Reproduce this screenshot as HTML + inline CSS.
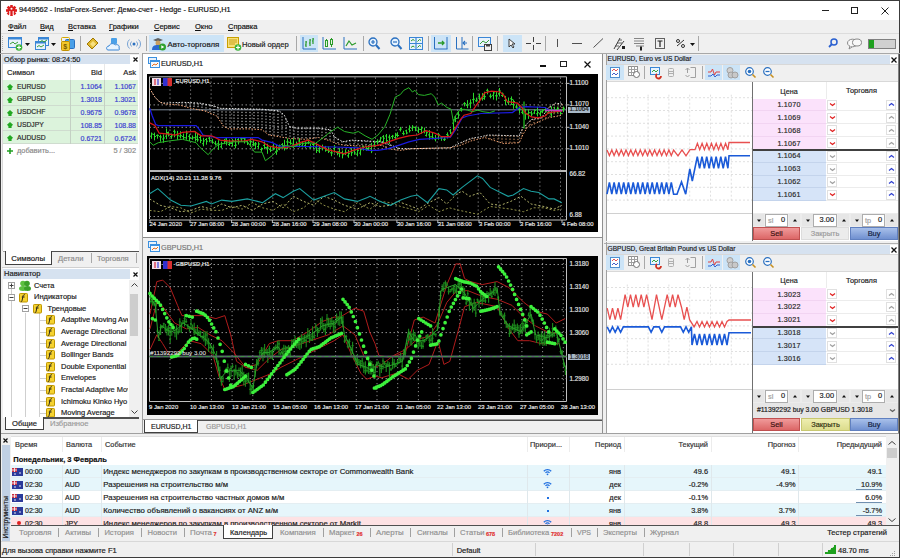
<!DOCTYPE html>
<html><head><meta charset="utf-8">
<style>
*{box-sizing:border-box;margin:0;padding:0}
html,body{width:900px;height:558px;overflow:hidden;background:#f0f0f0;font-family:"Liberation Sans",sans-serif;font-size:7.5px;color:#000;position:relative}
.a{position:absolute}
.t{position:absolute;white-space:nowrap;line-height:1;-webkit-text-stroke:0.18px currentColor}
svg{position:absolute;overflow:visible}
</style></head><body>
<div class="a" style="left:0px;top:0px;width:900px;height:20px;background:#fff;"></div>
<svg style="left:6px;top:5px" width="11" height="11" viewBox="0 0 10.4 10"><rect x="4" y="-0.2" width="2.4" height="2.6" fill="#dc1c1c" transform="rotate(0 5.2 5)"/><rect x="4" y="-0.2" width="2.4" height="2.6" fill="#dc1c1c" transform="rotate(45 5.2 5)"/><rect x="4" y="-0.2" width="2.4" height="2.6" fill="#dc1c1c" transform="rotate(90 5.2 5)"/><rect x="4" y="-0.2" width="2.4" height="2.6" fill="#dc1c1c" transform="rotate(135 5.2 5)"/><rect x="4" y="-0.2" width="2.4" height="2.6" fill="#dc1c1c" transform="rotate(180 5.2 5)"/><rect x="4" y="-0.2" width="2.4" height="2.6" fill="#dc1c1c" transform="rotate(225 5.2 5)"/><rect x="4" y="-0.2" width="2.4" height="2.6" fill="#dc1c1c" transform="rotate(270 5.2 5)"/><rect x="4" y="-0.2" width="2.4" height="2.6" fill="#dc1c1c" transform="rotate(315 5.2 5)"/><circle cx="5.2" cy="5" r="3.8" fill="#dc1c1c"/><circle cx="5.2" cy="3.3" r="1" fill="#fff"/><path d="M3.6 5.5v3.5M6.8 5.5v3.5" stroke="#fff" stroke-width="1"/></svg>
<div class="t" style="left:19px;top:6.45px;font-size:7.4px;color:#111;">9449562 - InstaForex-Server: Демо-счет - Hedge - EURUSD,H1</div>
<div class="a" style="left:822px;top:10px;width:7px;height:1px;background:#222;"></div>
<div class="a" style="left:851px;top:7px;width:7px;height:7px;border:1px solid #222"></div>
<svg style="left:881px;top:7px" width="8" height="8"><path d="M0.5 0.5L7.5 7.5M7.5 0.5L0.5 7.5" stroke="#222" stroke-width="1"/></svg>
<div class="a" style="left:0px;top:20px;width:900px;height:13px;background:#f0f0f0;"></div>
<div class="t" style="left:8px;top:23.40px;font-size:7.5px;color:#111;"><u style="text-decoration-thickness:0.6px;text-underline-offset:1px">Ф</u>айл</div>
<div class="t" style="left:40px;top:23.40px;font-size:7.5px;color:#111;"><u style="text-decoration-thickness:0.6px;text-underline-offset:1px">В</u>ид</div>
<div class="t" style="left:68px;top:23.40px;font-size:7.5px;color:#111;"><u style="text-decoration-thickness:0.6px;text-underline-offset:1px">В</u>ставка</div>
<div class="t" style="left:109px;top:23.40px;font-size:7.5px;color:#111;"><u style="text-decoration-thickness:0.6px;text-underline-offset:1px">Г</u>рафики</div>
<div class="t" style="left:154px;top:23.40px;font-size:7.5px;color:#111;"><u style="text-decoration-thickness:0.6px;text-underline-offset:1px">С</u>ервис</div>
<div class="t" style="left:195px;top:23.40px;font-size:7.5px;color:#111;"><u style="text-decoration-thickness:0.6px;text-underline-offset:1px">О</u>кно</div>
<div class="t" style="left:228px;top:23.40px;font-size:7.5px;color:#111;"><u style="text-decoration-thickness:0.6px;text-underline-offset:1px">С</u>правка</div>
<div class="a" style="left:0px;top:33px;width:900px;height:1px;background:#dcdcdc;"></div>
<div class="a" style="left:0px;top:34px;width:900px;height:19px;background:#f0f0f0;"></div>
<div class="a" style="left:2px;top:36px;width:1px;height:1px;background:#b0b0b0;"></div>
<div class="a" style="left:2px;top:38px;width:1px;height:1px;background:#b0b0b0;"></div>
<div class="a" style="left:2px;top:40px;width:1px;height:1px;background:#b0b0b0;"></div>
<div class="a" style="left:2px;top:42px;width:1px;height:1px;background:#b0b0b0;"></div>
<div class="a" style="left:2px;top:44px;width:1px;height:1px;background:#b0b0b0;"></div>
<div class="a" style="left:2px;top:46px;width:1px;height:1px;background:#b0b0b0;"></div>
<div class="a" style="left:2px;top:48px;width:1px;height:1px;background:#b0b0b0;"></div>
<div class="a" style="left:2px;top:50px;width:1px;height:1px;background:#b0b0b0;"></div>
<svg style="left:8px;top:37px" width="15" height="14" viewBox="0 0 15 14"><rect x="0.5" y="0.5" width="13" height="10" fill="#e8f2fc" stroke="#3a86d6"/><rect x="0.5" y="0.5" width="13" height="2" fill="#3a86d6"/><path d="M2 7l3-2 2 2 3-2" stroke="#3aa03a" fill="none"/><circle cx="11" cy="10.5" r="3.3" fill="#3cb43c"/><path d="M9 10.5h4M11 8.5v4" stroke="#fff" stroke-width="1.2"/></svg>
<svg style="left:25px;top:43px" width="5" height="3" viewBox="0 0 5 3"><path d="M0 0h5L2.5 3z" fill="#111"/></svg>
<svg style="left:35px;top:37px" width="14" height="14" viewBox="0 0 14 14"><rect x="3.5" y="0.5" width="10" height="8" fill="#e8f2fc" stroke="#3a86d6"/><rect x="3.5" y="0.5" width="10" height="2" fill="#3a86d6"/><rect x="0.5" y="4.5" width="10" height="8" fill="#e8f2fc" stroke="#3a86d6"/><rect x="0.5" y="4.5" width="10" height="2" fill="#3a86d6"/><path d="M2 10l2-1.5 2 1.5 3-2" stroke="#3aa03a" fill="none"/><path d="M5 5l2-1.5 2 1.5 3-2" stroke="#3aa03a" fill="none"/></svg>
<svg style="left:51px;top:43px" width="5" height="3" viewBox="0 0 5 3"><path d="M0 0h5L2.5 3z" fill="#111"/></svg>
<svg style="left:61px;top:37px" width="14" height="14" viewBox="0 0 14 14"><rect x="4.5" y="2.5" width="9" height="9" rx="1" fill="#4aa0e8" stroke="#2a70c0"/><rect x="0.5" y="0.5" width="8" height="4" rx="1" fill="none" stroke="#d4a800"/><rect x="0.5" y="4.5" width="8" height="9" rx="1" fill="#f2c82a" stroke="#c09000"/><text x="2.3" y="12" font-size="7" font-family="Liberation Sans" font-weight="bold" fill="#7a5a00">$</text></svg>
<div class="a" style="left:80px;top:36px;width:1px;height:15px;background:#a8a8a8;"></div>
<svg style="left:86px;top:37px" width="13" height="13" viewBox="0 0 13 13"><path d="M1 7l6-6 5 5-6 6z" fill="#e0b830" stroke="#a07800"/><path d="M4 7l3-3 3 3-3 3z" fill="#f8e080"/></svg>
<svg style="left:106px;top:38px" width="14" height="13" viewBox="0 0 14 13"><rect x="5" y="0" width="6" height="6" rx="1" fill="#4aa0e8"/><path d="M2 12c-2 0-2-4 1-4 1-3 5-3 6-1 2-1 5 0 4 3 1 2 0 2-1 2z" fill="#e8f4ff" stroke="#3a86d6"/></svg>
<svg style="left:127px;top:38px" width="14" height="12" viewBox="0 0 14 12"><circle cx="7" cy="6" r="1.5" fill="#2a70c0"/><path d="M4.5 3.5a3.5 3.5 0 0 0 0 5M9.5 3.5a3.5 3.5 0 0 1 0 5M2.5 1.5a6 6 0 0 0 0 9M11.5 1.5a6 6 0 0 1 0 9" stroke="#6a9ad0" fill="none" stroke-width="0.9"/></svg>
<div class="a" style="left:146px;top:36px;width:1px;height:15px;background:#a8a8a8;"></div>
<div class="a" style="left:149px;top:35px;width:75px;height:17px;background:#cce4f7;"></div>
<svg style="left:152px;top:37px" width="15" height="14" viewBox="0 0 15 14"><path d="M1 3l5-2 5 2-5 2z" fill="#606060"/><circle cx="6" cy="6" r="2.5" fill="#c8a060"/><path d="M0 13c0-4 2-5 6-5s5 2 5 5z" fill="#2a6ad0"/><circle cx="10.5" cy="10" r="3.5" fill="#2ea02e"/><path d="M9.3 8.2v3.6l3-1.8z" fill="#fff"/></svg>
<div class="t" style="left:167.5px;top:40.73px;font-size:7.85px;color:#1a1a1a;">Авто-торговля</div>
<svg style="left:227px;top:37px" width="15" height="14" viewBox="0 0 15 14"><rect x="0.5" y="0.5" width="11" height="10" fill="#f8e078" stroke="#c8a000"/><path d="M2 3h8M2 5h8M2 7h6" stroke="#b89000" stroke-width="0.8"/><circle cx="11" cy="10.5" r="3.3" fill="#3cb43c"/><path d="M9 10.5h4M11 8.5v4" stroke="#fff" stroke-width="1.2"/></svg>
<div class="t" style="left:242px;top:40.85px;font-size:7.6px;color:#1a1a1a;">Новый ордер</div>
<div class="a" style="left:296px;top:36px;width:1px;height:15px;background:#a8a8a8;"></div>
<div class="a" style="left:300px;top:35px;width:18px;height:17px;background:#cce4f7;"></div>
<svg style="left:302px;top:37px" width="14" height="13" viewBox="0 0 14 13"><path d="M1 0v12h13" stroke="#2a70c0" fill="none"/><path d="M4 4v6M3 8h1M4 5h1M8 2v7M7 6h1M8 3h1M11 1v6M10 4h1M11 2h1" stroke="#2a9a2a" stroke-width="1.2" fill="none"/></svg>
<svg style="left:322px;top:37px" width="14" height="13" viewBox="0 0 14 13"><path d="M1 0v12h13" stroke="#2a70c0" fill="none"/><rect x="3.5" y="3.5" width="2" height="6" fill="#e8f4e0" stroke="#2a9a2a"/><rect x="8.5" y="2.5" width="2" height="5" fill="#e8f4e0" stroke="#2a9a2a"/><path d="M4.5 2v1M9.5 1v1M9.5 8v2" stroke="#2a9a2a"/></svg>
<svg style="left:343px;top:37px" width="14" height="13" viewBox="0 0 14 13"><path d="M1 0v12h13" stroke="#2a70c0" fill="none"/><path d="M3 9l3-5 3 4 4-2" stroke="#2a9a2a" stroke-width="1.2" fill="none"/></svg>
<div class="a" style="left:363px;top:36px;width:1px;height:15px;background:#a8a8a8;"></div>
<svg style="left:368px;top:37px" width="12" height="13" viewBox="0 0 12 13"><circle cx="5" cy="5" r="4" fill="#e8f4ff" stroke="#2a70c0" stroke-width="1.3"/><path d="M3 5h4M5 3v4" stroke="#2a70c0" stroke-width="1.2"/><path d="M8 8l3.5 4" stroke="#2a70c0" stroke-width="2"/></svg>
<svg style="left:390px;top:37px" width="12" height="13" viewBox="0 0 12 13"><circle cx="5" cy="5" r="4" fill="#e8f4ff" stroke="#2a70c0" stroke-width="1.3"/><path d="M3 5h4" stroke="#2a70c0" stroke-width="1.2"/><path d="M8 8l3.5 4" stroke="#2a70c0" stroke-width="2"/></svg>
<svg style="left:409px;top:37px" width="14" height="13" viewBox="0 0 14 13"><rect x="0.5" y="0.5" width="13" height="12" fill="#e8f2fc" stroke="#3a86d6"/><path d="M7 0.5v12M0.5 6.5h13" stroke="#3a86d6" stroke-width="1.2"/><path d="M2 4l2-1.5 1.5 1M8.5 4.5l2-2 1.5 1M2 10.5l2-1.5 1.5 1M8.5 10.5l2-2 1.5 1" stroke="#2a9a2a" fill="none"/></svg>
<div class="a" style="left:428px;top:36px;width:1px;height:15px;background:#a8a8a8;"></div>
<div class="a" style="left:431px;top:35px;width:20px;height:17px;background:#cce4f7;"></div>
<svg style="left:433px;top:37px" width="15" height="13" viewBox="0 0 15 13"><path d="M1.5 0v12h13M14 0v12" stroke="#2a70c0" fill="none"/><path d="M5 6h6M9 4l2 2-2 2" stroke="#2a9a2a" stroke-width="1.3" fill="none"/></svg>
<svg style="left:455px;top:37px" width="13" height="13" viewBox="0 0 13 13"><path d="M1.5 0v12h12M7 0v12" stroke="#2a70c0" fill="none"/><path d="M12 6h-4M10 4l-2 2 2 2" stroke="#2a70c0" stroke-width="1.1" fill="none"/></svg>
<div class="a" style="left:472px;top:36px;width:1px;height:15px;background:#a8a8a8;"></div>
<svg style="left:478px;top:37px" width="14" height="14" viewBox="0 0 14 14"><rect x="0.5" y="0.5" width="12" height="9" fill="#e8f2fc" stroke="#3a86d6"/><path d="M2 7l3-3 3 2 3-3" stroke="#3aa03a" fill="none"/><rect x="6.5" y="7.5" width="7" height="6" fill="#f0f0f0" stroke="#404040"/><rect x="8" y="7.5" width="4" height="2" fill="#404040"/></svg>
<div class="a" style="left:497px;top:36px;width:1px;height:15px;background:#a8a8a8;"></div>
<div class="a" style="left:503px;top:35px;width:19px;height:17px;background:#cce4f7;"></div>
<svg style="left:508px;top:38px" width="8" height="10" viewBox="0 0 8 10"><path d="M1 1v8l2-2 2 3 1-1-2-3h3z" fill="#f8f8f8" stroke="#303030" stroke-width="0.9"/></svg>
<svg style="left:526px;top:37px" width="15" height="13" viewBox="0 0 15 13"><path d="M7.5 0v5M7.5 8v5M0 6.5h5M10 6.5h5" stroke="#404040" stroke-width="1"/></svg>
<div class="a" style="left:545px;top:36px;width:1px;height:15px;background:#a8a8a8;"></div>
<div class="a" style="left:557px;top:39px;width:1px;height:8px;background:#505050;"></div>
<div class="a" style="left:572px;top:43px;width:10px;height:1px;background:#505050;"></div>
<svg style="left:593px;top:38px" width="11" height="10" viewBox="0 0 11 10"><path d="M0.5 9.5L10 0.5" stroke="#505050"/></svg>
<svg style="left:613px;top:37px" width="13" height="14" viewBox="0 0 13 14"><path d="M1 12l6-11M4 13l7-9" stroke="#404040" stroke-width="1"/><path d="M2 9h4M4 6h5M6 3h3" stroke="#404040" stroke-width="0.8"/><rect x="9" y="9" width="3" height="3" fill="#202020"/></svg>
<svg style="left:634px;top:38px" width="11" height="13" viewBox="0 0 11 13"><path d="M0 0.5h10M0 3h10M0 5.5h10M2 8h8" stroke="#6a6a6a" stroke-width="0.8"/><rect x="6" y="8.5" width="2" height="4" fill="#202020"/></svg>
<svg style="left:655px;top:38px" width="10" height="11" viewBox="0 0 10 11"><rect x="0.5" y="0.5" width="9" height="10" fill="none" stroke="#606060"/><path d="M2.5 3h5M5 3v6" stroke="#202020" stroke-width="1.2"/></svg>
<svg style="left:676px;top:38px" width="9" height="11" viewBox="0 0 9 11"><circle cx="2" cy="3" r="1.5" fill="none" stroke="#303030"/><circle cx="7" cy="8" r="1.5" fill="none" stroke="#303030"/><path d="M1 8L8 2" stroke="#303030"/></svg>
<svg style="left:690px;top:43px" width="5" height="3" viewBox="0 0 5 3"><path d="M0 0h5L2.5 3z" fill="#111"/></svg>
<div class="a" style="left:698px;top:36px;width:1px;height:15px;background:#a8a8a8;"></div>
<svg style="left:828px;top:38px" width="10" height="10" viewBox="0 0 10 10"><circle cx="6" cy="4" r="3" fill="none" stroke="#2a60d0" stroke-width="1.5"/><path d="M4 6l-3 3" stroke="#2a60d0" stroke-width="1.8"/></svg>
<svg style="left:847px;top:38px" width="15" height="11" viewBox="0 0 15 11"><ellipse cx="5.5" cy="5" rx="5" ry="3.8" fill="#f8f8f8" stroke="#8a8a8a"/><ellipse cx="10" cy="4.5" rx="4.5" ry="3.5" fill="#f8f8f8" stroke="#8a8a8a"/><path d="M3 8l-1 3 3-2" fill="#f8f8f8" stroke="#8a8a8a"/></svg>
<div class="a" style="left:868px;top:39px;width:28px;height:10px;background:#d0d0d0;border:1px solid #808080"></div>
<div class="a" style="left:869px;top:40px;width:5px;height:8px;background:#1ea01e;"></div>
<div class="a" style="left:143px;top:53px;width:460px;height:381px;background:#f0f0f0;"></div>
<div class="a" style="left:143px;top:53px;width:460px;height:1px;background:#a0a0a0;"></div>
<div class="a" style="left:143px;top:54px;width:459px;height:19px;background:#ffffff;"></div>
<svg style="left:148px;top:57px" width="12" height="11" viewBox="0 0 12 11"><rect x="0.5" y="0.5" width="8" height="6" fill="#e8f2fc" stroke="#3a90e0"/><rect x="2.5" y="3.5" width="9" height="7" fill="#f4f8fc" stroke="#3a90e0"/><rect x="2.5" y="3.5" width="9" height="1.5" fill="#3a90e0"/><path d="M4 9l2-2 2 1 2-2" stroke="#e87020" fill="none"/></svg>
<div class="t" style="left:161px;top:60.00px;font-size:7.3px;color:#222;">EURUSD,H1</div>
<div class="a" style="left:143px;top:73px;width:459px;height:164px;background:#fff;"></div>
<div class="a" style="left:540px;top:65px;width:6px;height:1.5px;background:#111;"></div>
<div class="a" style="left:560px;top:61px;width:7px;height:6px;border:1px solid #222"></div>
<svg style="left:584px;top:61px" width="7" height="7" viewBox="0 0 7 7"><path d="M0.5 0.5l6 6M6.5 0.5l-6 6" stroke="#111" stroke-width="1.2"/></svg>
<svg style="left:147px;top:73.5px" width="451" height="158"><rect x="0" y="0" width="451" height="158" fill="#000"/><path d="M2.5 145.0V2.799999999999997H419.5V146.0H2.5" stroke="#c0c0c0" stroke-width="1" fill="none"/><path d="M2.5 97.0H419.5" stroke="#b8b8b8" stroke-width="2"/><path d="M23.0 3.5V145.5" stroke="#a0a0a0" stroke-width="0.9" stroke-dasharray="1.2 2.8"/><path d="M43.6 3.5V145.5" stroke="#a0a0a0" stroke-width="0.9" stroke-dasharray="1.2 2.8"/><path d="M64.1 3.5V145.5" stroke="#a0a0a0" stroke-width="0.9" stroke-dasharray="1.2 2.8"/><path d="M84.7 3.5V145.5" stroke="#a0a0a0" stroke-width="0.9" stroke-dasharray="1.2 2.8"/><path d="M105.2 3.5V145.5" stroke="#a0a0a0" stroke-width="0.9" stroke-dasharray="1.2 2.8"/><path d="M125.8 3.5V145.5" stroke="#a0a0a0" stroke-width="0.9" stroke-dasharray="1.2 2.8"/><path d="M146.3 3.5V145.5" stroke="#a0a0a0" stroke-width="0.9" stroke-dasharray="1.2 2.8"/><path d="M166.9 3.5V145.5" stroke="#a0a0a0" stroke-width="0.9" stroke-dasharray="1.2 2.8"/><path d="M187.4 3.5V145.5" stroke="#a0a0a0" stroke-width="0.9" stroke-dasharray="1.2 2.8"/><path d="M208.0 3.5V145.5" stroke="#a0a0a0" stroke-width="0.9" stroke-dasharray="1.2 2.8"/><path d="M228.5 3.5V145.5" stroke="#a0a0a0" stroke-width="0.9" stroke-dasharray="1.2 2.8"/><path d="M249.1 3.5V145.5" stroke="#a0a0a0" stroke-width="0.9" stroke-dasharray="1.2 2.8"/><path d="M269.6 3.5V145.5" stroke="#a0a0a0" stroke-width="0.9" stroke-dasharray="1.2 2.8"/><path d="M290.2 3.5V145.5" stroke="#a0a0a0" stroke-width="0.9" stroke-dasharray="1.2 2.8"/><path d="M310.7 3.5V145.5" stroke="#a0a0a0" stroke-width="0.9" stroke-dasharray="1.2 2.8"/><path d="M331.2 3.5V145.5" stroke="#a0a0a0" stroke-width="0.9" stroke-dasharray="1.2 2.8"/><path d="M351.8 3.5V145.5" stroke="#a0a0a0" stroke-width="0.9" stroke-dasharray="1.2 2.8"/><path d="M372.4 3.5V145.5" stroke="#a0a0a0" stroke-width="0.9" stroke-dasharray="1.2 2.8"/><path d="M392.9 3.5V145.5" stroke="#a0a0a0" stroke-width="0.9" stroke-dasharray="1.2 2.8"/><path d="M413.5 3.5V145.5" stroke="#a0a0a0" stroke-width="0.9" stroke-dasharray="1.2 2.8"/><path d="M2.5 9.4H419.5" stroke="#a0a0a0" stroke-width="0.9" stroke-dasharray="1.5 2.5"/><path d="M2.5 30.9H419.5" stroke="#a0a0a0" stroke-width="0.9" stroke-dasharray="1.5 2.5"/><path d="M2.5 53.3H419.5" stroke="#a0a0a0" stroke-width="0.9" stroke-dasharray="1.5 2.5"/><path d="M2.5 74.8H419.5" stroke="#a0a0a0" stroke-width="0.9" stroke-dasharray="1.5 2.5"/><path d="M2.5 142.5H419.5" stroke="#a0a0a0" stroke-width="0.9" stroke-dasharray="1.5 2.5"/><path d="M2.5 35.8H419.5" stroke="#8a9aaa" stroke-width="0.9"/><path d="M31 28.5V30.8" stroke="#d8d8d8" stroke-width="1" stroke-dasharray="1.2 1.8" opacity="1"/><path d="M35 28.3V31.8" stroke="#d8d8d8" stroke-width="1" stroke-dasharray="1.2 1.8" opacity="1"/><path d="M39 28.5V32.9" stroke="#d8d8d8" stroke-width="1" stroke-dasharray="1.2 1.8" opacity="1"/><path d="M43 28.7V34.0" stroke="#d8d8d8" stroke-width="1" stroke-dasharray="1.2 1.8" opacity="1"/><path d="M47 28.8V34.9" stroke="#d8d8d8" stroke-width="1" stroke-dasharray="1.2 1.8" opacity="1"/><path d="M51 29.0V35.6" stroke="#d8d8d8" stroke-width="1" stroke-dasharray="1.2 1.8" opacity="1"/><path d="M55 29.6V36.4" stroke="#d8d8d8" stroke-width="1" stroke-dasharray="1.2 1.8" opacity="1"/><path d="M59 30.3V37.4" stroke="#d8d8d8" stroke-width="1" stroke-dasharray="1.2 1.8" opacity="1"/><path d="M63 31.1V39.1" stroke="#d8d8d8" stroke-width="1" stroke-dasharray="1.2 1.8" opacity="1"/><path d="M67 32.0V40.8" stroke="#d8d8d8" stroke-width="1" stroke-dasharray="1.2 1.8" opacity="1"/><path d="M71 33.5V43.8" stroke="#d8d8d8" stroke-width="1" stroke-dasharray="1.2 1.8" opacity="1"/><path d="M75 34.3V50.0" stroke="#d8d8d8" stroke-width="1" stroke-dasharray="1.2 1.8" opacity="1"/><path d="M79 34.4V53.6" stroke="#d8d8d8" stroke-width="1" stroke-dasharray="1.2 1.8" opacity="1"/><path d="M83 34.5V54.9" stroke="#d8d8d8" stroke-width="1" stroke-dasharray="1.2 1.8" opacity="1"/><path d="M87 34.6V54.9" stroke="#d8d8d8" stroke-width="1" stroke-dasharray="1.2 1.8" opacity="1"/><path d="M91 34.7V54.9" stroke="#d8d8d8" stroke-width="1" stroke-dasharray="1.2 1.8" opacity="1"/><path d="M95 34.8V54.9" stroke="#d8d8d8" stroke-width="1" stroke-dasharray="1.2 1.8" opacity="1"/><path d="M99 34.9V54.9" stroke="#d8d8d8" stroke-width="1" stroke-dasharray="1.2 1.8" opacity="1"/><path d="M103 34.9V54.9" stroke="#d8d8d8" stroke-width="1" stroke-dasharray="1.2 1.8" opacity="1"/><path d="M107 35.0V55.1" stroke="#d8d8d8" stroke-width="1" stroke-dasharray="1.2 1.8" opacity="1"/><path d="M111 35.1V55.5" stroke="#d8d8d8" stroke-width="1" stroke-dasharray="1.2 1.8" opacity="1"/><path d="M115 35.2V55.8" stroke="#d8d8d8" stroke-width="1" stroke-dasharray="1.2 1.8" opacity="1"/><path d="M119 35.6V58.8" stroke="#d8d8d8" stroke-width="1" stroke-dasharray="1.2 1.8" opacity="1"/><path d="M123 36.0V61.2" stroke="#d8d8d8" stroke-width="1" stroke-dasharray="1.2 1.8" opacity="1"/><path d="M127 36.4V61.8" stroke="#d8d8d8" stroke-width="1" stroke-dasharray="1.2 1.8" opacity="1"/><path d="M131 36.8V62.5" stroke="#d8d8d8" stroke-width="1" stroke-dasharray="1.2 1.8" opacity="1"/><path d="M135 39.3V63.2" stroke="#d8d8d8" stroke-width="1" stroke-dasharray="1.2 1.8" opacity="1"/><path d="M139 44.9V63.8" stroke="#d8d8d8" stroke-width="1" stroke-dasharray="1.2 1.8" opacity="1"/><path d="M143 52.5V64.4" stroke="#d8d8d8" stroke-width="1" stroke-dasharray="1.2 1.8" opacity="1"/><path d="M147 53.5V64.7" stroke="#d8d8d8" stroke-width="1" stroke-dasharray="1.2 1.8" opacity="1"/><path d="M151 54.1V64.9" stroke="#d8d8d8" stroke-width="1" stroke-dasharray="1.2 1.8" opacity="1"/><path d="M155 54.1V65.1" stroke="#d8d8d8" stroke-width="1" stroke-dasharray="1.2 1.8" opacity="1"/><path d="M159 54.1V65.2" stroke="#d8d8d8" stroke-width="1" stroke-dasharray="1.2 1.8" opacity="1"/><path d="M163 54.1V64.6" stroke="#d8d8d8" stroke-width="1" stroke-dasharray="1.2 1.8" opacity="1"/><path d="M167 54.1V64.1" stroke="#d8d8d8" stroke-width="1" stroke-dasharray="1.2 1.8" opacity="1"/><path d="M171 54.1V63.6" stroke="#d8d8d8" stroke-width="1" stroke-dasharray="1.2 1.8" opacity="1"/><path d="M175 54.6V64.5" stroke="#d8d8d8" stroke-width="1" stroke-dasharray="1.2 1.8" opacity="1"/><path d="M179 55.1V65.6" stroke="#d8d8d8" stroke-width="1" stroke-dasharray="1.2 1.8" opacity="1"/><path d="M183 55.7V66.8" stroke="#d8d8d8" stroke-width="1" stroke-dasharray="1.2 1.8" opacity="1"/><path d="M187 62.3V68.6" stroke="#d8d8d8" stroke-width="1" stroke-dasharray="1.2 1.8" opacity="1"/><path d="M191 65.0V69.9" stroke="#d8d8d8" stroke-width="1" stroke-dasharray="1.2 1.8" opacity="1"/><path d="M195 67.3V70.8" stroke="#d8d8d8" stroke-width="1" stroke-dasharray="1.2 1.8" opacity="1"/><path d="M199 67.2V71.4" stroke="#d8d8d8" stroke-width="1" stroke-dasharray="1.2 1.8" opacity="1"/><path d="M203 66.4V71.5" stroke="#d8d8d8" stroke-width="1" stroke-dasharray="1.2 1.8" opacity="1"/><path d="M207 66.2V71.7" stroke="#d8d8d8" stroke-width="1" stroke-dasharray="1.2 1.8" opacity="1"/><path d="M211 66.5V71.8" stroke="#d8d8d8" stroke-width="1" stroke-dasharray="1.2 1.8" opacity="1"/><path d="M215 66.7V72.0" stroke="#d8d8d8" stroke-width="1" stroke-dasharray="1.2 1.8" opacity="1"/><path d="M219 66.9V72.1" stroke="#d8d8d8" stroke-width="1" stroke-dasharray="1.2 1.8" opacity="1"/><path d="M223 67.1V71.9" stroke="#d8d8d8" stroke-width="1" stroke-dasharray="1.2 1.8" opacity="1"/><path d="M227 67.4V71.7" stroke="#d8d8d8" stroke-width="1" stroke-dasharray="1.2 1.8" opacity="1"/><path d="M231 67.6V71.5" stroke="#d8d8d8" stroke-width="1" stroke-dasharray="1.2 1.8" opacity="1"/><path d="M235 67.8V71.3" stroke="#d8d8d8" stroke-width="1" stroke-dasharray="1.2 1.8" opacity="1"/><path d="M239 69.3V73.5" stroke="#d8d8d8" stroke-width="1" stroke-dasharray="1.2 1.8" opacity="1"/><path d="M243 70.8V74.9" stroke="#d8d8d8" stroke-width="1" stroke-dasharray="1.2 1.8" opacity="1"/><path d="M247 72.3V75.5" stroke="#d8d8d8" stroke-width="1" stroke-dasharray="1.2 1.8" opacity="1"/><path d="M251 73.8V76.1" stroke="#d8d8d8" stroke-width="1" stroke-dasharray="1.2 1.8" opacity="1"/><path d="M315 68.1V70.7" stroke="#e0a070" stroke-width="1" stroke-dasharray="1.2 1.8" opacity="1"/><path d="M319 66.4V69.0" stroke="#e0a070" stroke-width="1" stroke-dasharray="1.2 1.8" opacity="1"/><path d="M323 64.7V67.3" stroke="#e0a070" stroke-width="1" stroke-dasharray="1.2 1.8" opacity="1"/><path d="M327 63.9V66.2" stroke="#e0a070" stroke-width="1" stroke-dasharray="1.2 1.8" opacity="1"/><path d="M339 61.5V63.9" stroke="#e0a070" stroke-width="1" stroke-dasharray="1.2 1.8" opacity="1"/><path d="M343 61.1V65.2" stroke="#e0a070" stroke-width="1" stroke-dasharray="1.2 1.8" opacity="1"/><path d="M347 61.2V66.5" stroke="#e0a070" stroke-width="1" stroke-dasharray="1.2 1.8" opacity="1"/><path d="M351 61.3V67.8" stroke="#e0a070" stroke-width="1" stroke-dasharray="1.2 1.8" opacity="1"/><path d="M355 61.4V69.0" stroke="#e0a070" stroke-width="1" stroke-dasharray="1.2 1.8" opacity="1"/><path d="M359 61.5V69.5" stroke="#e0a070" stroke-width="1" stroke-dasharray="1.2 1.8" opacity="1"/><path d="M363 61.6V69.2" stroke="#e0a070" stroke-width="1" stroke-dasharray="1.2 1.8" opacity="1"/><path d="M367 61.7V69.0" stroke="#e0a070" stroke-width="1" stroke-dasharray="1.2 1.8" opacity="1"/><path d="M371 61.9V68.8" stroke="#e0a070" stroke-width="1" stroke-dasharray="1.2 1.8" opacity="1"/><path d="M375 55.7V62.6" stroke="#e0a070" stroke-width="1" stroke-dasharray="1.2 1.8" opacity="1"/><path d="M379 50.8V55.5" stroke="#e0a070" stroke-width="1" stroke-dasharray="1.2 1.8" opacity="1"/><path d="M383 46.8V51.6" stroke="#e0a070" stroke-width="1" stroke-dasharray="1.2 1.8" opacity="1"/><path d="M387 45.1V50.1" stroke="#e0a070" stroke-width="1" stroke-dasharray="1.2 1.8" opacity="1"/><path d="M391 44.4V48.2" stroke="#e0a070" stroke-width="1" stroke-dasharray="1.2 1.8" opacity="1"/><path d="M395 43.2V46.2" stroke="#e0a070" stroke-width="1" stroke-dasharray="1.2 1.8" opacity="1"/><path d="M399 37.2V44.7" stroke="#e0a070" stroke-width="1" stroke-dasharray="1.2 1.8" opacity="1"/><path d="M403 32.6V43.5" stroke="#e0a070" stroke-width="1" stroke-dasharray="1.2 1.8" opacity="1"/><path d="M407 30.1V42.8" stroke="#e0a070" stroke-width="1" stroke-dasharray="1.2 1.8" opacity="1"/><path d="M411 29.5V42.0" stroke="#e0a070" stroke-width="1" stroke-dasharray="1.2 1.8" opacity="1"/><path d="M415 30.0V41.3" stroke="#e0a070" stroke-width="1" stroke-dasharray="1.2 1.8" opacity="1"/><polyline points="2.7,14.5 7.9,23.1 13.0,28.3 18.2,29.1 35.4,28.3 52.6,29.1 66.3,31.7 73.2,34.3 115.0,35.2 132.2,36.9 137.3,41.2 142.5,52.4 149.4,54.1 171.7,54.1 183.8,55.8 187.2,62.7 195.8,67.8 204.4,66.1 235.0,67.8 253.3,74.7 265.4,74.7 303.2,73.8 313.5,68.7 323.8,64.4 334.1,62.7 341.0,61.0 372.3,61.9 375.7,54.1 379.1,50.7 384.3,45.5 394.6,43.8 401.5,33.5 408.4,29.2 415.3,30.0" stroke="#e8e8e8" stroke-width="1" fill="none" stroke-dasharray="1.5 1.5" opacity="1"/><polyline points="2.7,14.5 7.9,23.1 13.0,28.3 18.2,30.0 32.0,30.9 44.0,34.3 57.7,36.9 69.8,42.0 76.6,52.4 81.8,54.9 104.1,54.9 115.0,55.8 121.9,61.0 132.2,62.7 142.5,64.4 158.0,65.3 171.7,63.5 183.8,67.0 188.9,69.5 197.5,71.3 218.1,72.1 235.0,71.3 241.3,74.7 253.3,76.4 265.4,74.7 303.2,73.8 313.5,71.3 323.8,67.0 337.6,63.5 356.8,69.6 372.3,68.7 375.7,61.0 380.9,52.4 387.7,49.8 394.6,46.4 401.5,43.8 415.3,41.2" stroke="#f0a070" stroke-width="1" fill="none" stroke-dasharray="1.5 1.5" opacity="1"/><path d="M4.5 58.5v6.3M3.0 62.2h1.5M4.5 60.0h1.5M7.5 58.6v7.8M6.0 60.4h1.5M7.5 62.5h1.5M10.5 60.4v4.3M9.0 61.4h1.5M10.5 61.4h1.5M13.5 60.7v7.0M12.0 62.6h1.5M13.5 63.0h1.5M16.5 60.4v8.4M15.0 65.0h1.5M16.5 64.0h1.5M19.5 54.4v10.8M18.0 62.2h1.5M19.5 58.5h1.5M21.5 57.5v5.0M20.0 59.5h1.5M21.5 61.0h1.5M24.5 59.5v5.3M23.0 62.6h1.5M24.5 61.8h1.5M27.5 55.5v7.8M26.0 57.3h1.5M27.5 58.0h1.5M30.5 56.9v8.8M29.0 60.3h1.5M30.5 61.7h1.5M33.5 57.2v7.2M32.0 62.1h1.5M33.5 61.7h1.5M36.5 59.5v5.7M35.0 62.5h1.5M36.5 63.7h1.5M39.5 56.6v9.1M38.0 63.8h1.5M39.5 59.1h1.5M42.5 60.2v6.9M41.0 62.3h1.5M42.5 63.7h1.5M45.5 61.5v4.3M44.0 64.3h1.5M45.5 63.8h1.5M48.5 57.4v10.1M47.0 63.7h1.5M48.5 63.0h1.5M50.5 59.7v8.1M49.0 65.4h1.5M50.5 65.9h1.5M53.5 61.8v7.3M52.0 63.5h1.5M53.5 66.3h1.5M56.5 63.8v8.5M55.0 69.7h1.5M56.5 66.9h1.5M59.5 64.0v6.7M58.0 65.5h1.5M59.5 67.2h1.5M62.5 63.0v5.2M61.0 64.2h1.5M62.5 66.4h1.5M65.5 64.8v4.9M64.0 66.9h1.5M65.5 68.3h1.5M68.5 66.9v4.6M67.0 69.3h1.5M68.5 70.2h1.5M71.5 66.2v9.7M70.0 69.8h1.5M71.5 70.6h1.5M74.5 67.7v6.5M73.0 72.8h1.5M74.5 69.6h1.5M77.5 64.9v5.2M76.0 66.6h1.5M77.5 67.4h1.5M79.5 63.3v8.1M78.0 65.0h1.5M79.5 67.0h1.5M82.5 65.4v6.6M81.0 70.5h1.5M82.5 69.4h1.5M85.5 64.9v7.6M84.0 69.5h1.5M85.5 66.7h1.5M88.5 64.1v10.3M87.0 71.6h1.5M88.5 71.1h1.5M91.5 63.8v6.7M90.0 65.6h1.5M91.5 67.7h1.5M94.5 63.4v4.4M93.0 64.8h1.5M94.5 64.7h1.5M97.5 63.1v6.4M96.0 64.4h1.5M97.5 65.0h1.5M100.5 66.3v4.7M99.0 67.3h1.5M100.5 69.7h1.5M103.5 64.2v8.3M102.0 67.1h1.5M103.5 67.6h1.5M106.5 65.7v6.5M105.0 70.4h1.5M106.5 71.0h1.5M108.5 68.0v7.3M107.0 69.8h1.5M108.5 69.9h1.5M111.5 68.1v6.4M110.0 72.6h1.5M111.5 70.0h1.5M114.5 73.5v4.2M113.0 75.6h1.5M114.5 74.7h1.5M117.5 67.4v7.8M116.0 71.4h1.5M117.5 73.5h1.5M120.5 69.8v10.0M119.0 73.4h1.5M120.5 74.1h1.5M123.5 72.9v5.2M122.0 75.6h1.5M123.5 76.3h1.5M126.5 69.8v6.3M125.0 74.1h1.5M126.5 74.8h1.5M129.5 70.8v10.0M128.0 77.7h1.5M129.5 77.2h1.5M132.5 70.6v5.6M131.0 72.9h1.5M132.5 71.8h1.5M135.5 69.1v4.2M134.0 70.6h1.5M135.5 71.7h1.5M137.5 65.8v10.7M136.0 73.9h1.5M137.5 74.2h1.5M140.5 64.4v10.7M139.0 67.9h1.5M140.5 68.0h1.5M143.5 65.3v5.4M142.0 68.4h1.5M143.5 69.3h1.5M146.5 64.2v9.9M145.0 70.1h1.5M146.5 71.0h1.5M149.5 67.6v4.6M148.0 71.0h1.5M149.5 70.7h1.5M152.5 64.2v9.3M151.0 67.0h1.5M152.5 70.4h1.5M155.5 67.1v6.3M154.0 72.0h1.5M155.5 69.8h1.5M158.5 67.3v6.8M157.0 71.7h1.5M158.5 69.4h1.5M161.5 65.3v4.9M160.0 68.9h1.5M161.5 68.7h1.5M163.5 69.7v5.0M162.0 73.7h1.5M163.5 72.7h1.5M166.5 68.7v6.5M165.0 70.5h1.5M166.5 70.1h1.5M169.5 68.2v10.8M168.0 73.8h1.5M169.5 76.4h1.5M172.5 72.1v7.0M171.0 77.0h1.5M172.5 74.4h1.5M175.5 70.6v5.8M174.0 72.6h1.5M175.5 73.8h1.5M178.5 71.9v5.8M177.0 73.6h1.5M178.5 76.3h1.5M181.5 72.5v6.5M180.0 76.1h1.5M181.5 77.3h1.5M184.5 75.3v6.9M183.0 78.8h1.5M184.5 78.9h1.5M187.5 71.0v7.7M186.0 74.6h1.5M187.5 73.4h1.5M190.5 77.3v4.0M189.0 78.5h1.5M190.5 79.3h1.5M192.5 74.1v9.1M191.0 77.7h1.5M192.5 78.8h1.5M195.5 76.5v7.9M194.0 78.5h1.5M195.5 80.7h1.5M198.5 75.4v5.7M197.0 79.2h1.5M198.5 78.3h1.5M201.5 75.9v7.9M200.0 81.8h1.5M201.5 79.6h1.5M204.5 73.6v8.3M203.0 77.8h1.5M204.5 78.7h1.5M207.5 73.4v7.2M206.0 76.9h1.5M207.5 78.9h1.5M210.5 73.4v8.9M209.0 80.2h1.5M210.5 76.6h1.5M213.5 73.5v7.9M212.0 79.1h1.5M213.5 75.7h1.5M216.5 71.7v4.9M215.0 72.9h1.5M216.5 73.4h1.5M219.5 72.3v4.5M218.0 75.3h1.5M219.5 75.6h1.5M221.5 71.4v5.1M220.0 74.5h1.5M221.5 72.9h1.5M224.5 68.9v10.2M223.0 72.3h1.5M224.5 76.8h1.5M227.5 66.5v6.8M226.0 71.9h1.5M227.5 71.2h1.5M230.5 65.3v5.1M229.0 67.9h1.5M230.5 67.3h1.5M233.5 62.9v5.4M232.0 66.3h1.5M233.5 64.0h1.5M236.5 61.1v7.9M235.0 62.7h1.5M236.5 64.2h1.5M239.5 60.0v8.4M238.0 62.0h1.5M239.5 66.6h1.5M242.5 60.6v9.5M241.0 63.1h1.5M242.5 64.0h1.5M245.5 60.9v4.3M244.0 62.5h1.5M245.5 62.1h1.5M248.5 58.8v7.0M247.0 63.6h1.5M248.5 61.2h1.5M250.5 58.3v5.0M249.0 61.1h1.5M250.5 61.5h1.5M253.5 52.9v4.6M252.0 55.7h1.5M253.5 55.0h1.5M256.5 56.8v4.5M255.0 59.4h1.5M256.5 59.8h1.5M259.5 55.7v4.6M258.0 56.8h1.5M259.5 59.0h1.5M262.5 51.3v7.2M261.0 55.1h1.5M262.5 56.7h1.5M265.5 51.1v5.9M264.0 54.1h1.5M265.5 53.1h1.5M268.5 52.4v4.8M267.0 53.5h1.5M268.5 53.9h1.5M271.5 53.0v6.2M270.0 57.0h1.5M271.5 55.3h1.5M274.5 52.4v7.5M273.0 55.5h1.5M274.5 54.0h1.5M277.5 53.6v5.8M276.0 57.3h1.5M277.5 56.7h1.5M279.5 57.3v5.3M278.0 61.4h1.5M279.5 58.7h1.5M282.5 56.1v9.7M281.0 60.9h1.5M282.5 62.9h1.5M285.5 58.6v6.8M284.0 62.8h1.5M285.5 63.9h1.5M288.5 61.0v6.4M287.0 65.0h1.5M288.5 64.7h1.5M291.5 58.9v6.8M290.0 60.5h1.5M291.5 60.8h1.5M294.5 62.3v4.5M293.0 63.9h1.5M294.5 63.7h1.5M297.5 62.4v4.6M296.0 65.7h1.5M297.5 65.2h1.5M300.5 58.4v6.0M299.0 60.6h1.5M300.5 61.2h1.5M303.5 55.0v5.1M302.0 56.8h1.5M303.5 59.0h1.5M306.5 45.3v10.8M305.0 49.1h1.5M306.5 53.8h1.5M308.5 41.9v6.2M307.0 43.1h1.5M308.5 44.5h1.5M311.5 37.3v7.3M310.0 39.6h1.5M311.5 41.0h1.5M314.5 33.6v4.0M313.0 34.6h1.5M314.5 35.4h1.5M317.5 28.1v4.3M316.0 29.8h1.5M317.5 29.6h1.5M320.5 26.1v8.1M319.0 31.4h1.5M320.5 30.9h1.5M323.5 25.4v9.0M322.0 29.3h1.5M323.5 29.0h1.5M326.5 18.8v10.9M325.0 25.7h1.5M326.5 25.2h1.5M329.5 23.6v4.3M328.0 26.8h1.5M329.5 26.1h1.5M332.5 19.6v9.1M331.0 22.2h1.5M332.5 24.3h1.5M335.5 19.1v7.5M334.0 24.3h1.5M335.5 24.3h1.5M337.5 17.7v8.1M336.0 22.6h1.5M337.5 22.7h1.5M340.5 14.7v5.6M339.0 16.3h1.5M340.5 17.0h1.5M343.5 19.6v4.7M342.0 22.1h1.5M343.5 22.3h1.5M346.5 17.2v8.4M345.0 21.3h1.5M346.5 18.9h1.5M349.5 16.9v9.6M348.0 21.8h1.5M349.5 21.9h1.5M352.5 14.0v8.6M351.0 19.6h1.5M352.5 17.0h1.5M355.5 18.5v4.5M354.0 21.4h1.5M355.5 20.0h1.5M358.5 21.9v9.2M357.0 26.4h1.5M358.5 25.8h1.5M361.5 23.5v7.4M360.0 28.4h1.5M361.5 27.7h1.5M364.5 22.4v8.5M363.0 24.8h1.5M364.5 25.4h1.5M366.5 25.6v9.2M365.0 30.6h1.5M366.5 27.5h1.5M369.5 30.3v4.4M368.0 33.0h1.5M369.5 33.1h1.5M372.5 30.8v8.7M371.0 35.2h1.5M372.5 35.0h1.5M375.5 32.9v7.3M374.0 38.3h1.5M375.5 35.3h1.5M378.5 34.9v10.8M377.0 37.2h1.5M378.5 40.0h1.5M381.5 35.2v9.7M380.0 39.8h1.5M381.5 38.7h1.5M384.5 37.0v5.5M383.0 38.8h1.5M384.5 40.0h1.5M387.5 35.1v5.0M386.0 39.0h1.5M387.5 36.5h1.5M390.5 32.7v9.7M389.0 39.8h1.5M390.5 38.7h1.5M393.5 36.7v5.6M392.0 39.4h1.5M393.5 37.9h1.5M395.5 35.2v4.0M394.0 37.1h1.5M395.5 36.7h1.5M398.5 33.7v5.0M397.0 35.6h1.5M398.5 37.2h1.5M401.5 35.9v4.0M400.0 38.7h1.5M401.5 37.0h1.5M404.5 32.3v10.5M403.0 40.1h1.5M404.5 36.2h1.5M407.5 32.7v6.6M406.0 37.9h1.5M407.5 36.3h1.5M410.5 32.9v6.5M409.0 35.3h1.5M410.5 34.4h1.5M413.5 35.8v4.7M412.0 37.6h1.5M413.5 39.4h1.5M416.5 32.5v5.7M415.0 35.4h1.5M416.5 34.3h1.5" stroke="#2ad82a" stroke-width="1"/><path d="M377 27.5V54.5" stroke="#22c822" stroke-width="1.2"/><polyline points="2.7,34.3 5.3,42.0 8.7,50.6 11.3,51.5 49.1,51.5 52.6,55.8 56.0,61.0 69.8,63.5 111.0,63.5 115.0,66.1 125.3,68.7 132.2,72.1 188.9,73.0 211.3,73.8 221.6,76.4 231.0,76.4 241.3,74.7 251.6,71.3 261.9,67.8 272.3,65.3 303.2,63.5 308.4,55.8 315.2,43.8 320.4,42.0 334.1,39.5 365.4,38.6 372.3,33.5 379.1,32.6 398.1,33.5 401.5,36.1 415.3,36.9" stroke="#1a1ae0" stroke-width="1.25" fill="none" opacity="1"/><polyline points="2.7,48.9 7.9,51.5 12.2,59.2 21.6,60.1 28.5,61.0 35.4,58.4 47.4,57.5 54.3,61.8 64.6,61.8 73.2,66.1 83.5,67.0 97.3,67.0 104.1,65.3 115.0,67.8 121.9,72.1 132.2,73.8 142.5,73.0 152.8,68.7 161.4,66.1 170.0,70.4 180.3,75.6 190.6,78.1 197.5,79.9 206.1,76.4 218.1,73.0 231.0,71.3 241.3,67.8 251.6,64.4 261.9,61.8 270.5,61.0 279.1,56.7 287.7,59.2 294.6,62.7 303.2,62.7 308.4,54.1 313.5,45.5 317.0,41.2 323.8,39.5 329.0,31.7 334.1,24.8 337.6,18.8 344.5,17.1 353.3,18.0 356.8,21.4 360.2,27.5 370.5,29.2 374.0,32.6 379.1,39.5 384.3,42.9 391.2,43.8 398.1,42.0 401.5,38.6 415.3,36.9" stroke="#d81818" stroke-width="1.25" fill="none" opacity="1"/><polyline points="2.7,67.8 6.2,71.3 11.3,68.7 21.6,67.0 35.4,65.3 42.3,67.0 49.1,68.7 52.6,73.0 61.2,80.7 66.3,74.7 71.5,70.4 87.0,67.8 100.7,67.8 107.6,78.1 115.0,78.1 118.4,86.7 125.3,81.6 132.2,74.7 139.1,71.3 146.0,73.0 154.5,69.5 161.4,68.7 168.3,69.5 175.2,64.4 183.8,57.5 190.6,53.2 197.5,57.5 206.1,59.2 211.3,57.5 218.1,61.8 225.0,65.3 231.0,61.0 237.9,52.4 243.0,40.3 248.2,23.1 253.3,20.6 256.8,16.3 261.9,13.7 265.4,18.0 268.0,16.3 271.4,20.6 277.4,21.4 284.3,19.7 287.7,23.1 291.2,30.9 294.6,29.1 299.8,33.4 304.1,35.2 306.6,48.9 308.4,42.0 311.8,36.9 317.0,35.2 320.4,36.1 325.6,37.7 330.7,36.1 335.9,37.7 342.7,38.6 347.9,36.9" stroke="#28b428" stroke-width="1.0" fill="none" opacity="1"/><polyline points="398.0,36.5 415.0,36.5" stroke="#c040c0" stroke-width="1.5" fill="none" opacity="1"/><path d="M419.5 9.400000000000006h3" stroke="#c0c0c0"/><path d="M419.5 30.900000000000006h3" stroke="#c0c0c0"/><path d="M419.5 53.3h3" stroke="#c0c0c0"/><path d="M419.5 74.80000000000001h3" stroke="#c0c0c0"/><path d="M3.0 146.0v3" stroke="#c0c0c0"/><path d="M43.0 146.0v3" stroke="#c0c0c0"/><path d="M84.6 146.0v3" stroke="#c0c0c0"/><path d="M125.4 146.0v3" stroke="#c0c0c0"/><path d="M166.0 146.0v3" stroke="#c0c0c0"/><path d="M207.0 146.0v3" stroke="#c0c0c0"/><path d="M249.9 146.0v3" stroke="#c0c0c0"/><path d="M290.8 146.0v3" stroke="#c0c0c0"/><path d="M332.0 146.0v3" stroke="#c0c0c0"/><path d="M373.0 146.0v3" stroke="#c0c0c0"/><path d="M415.0 146.0v3" stroke="#c0c0c0"/><polyline points="2.6,124.9 13.3,131.3 23.6,133.8 33.8,137.7 44.0,136.4 54.3,132.5 64.5,135.1 74.7,130.0 85.0,133.8 95.2,131.3 105.4,136.4 115.6,130.0 125.9,127.4 136.1,133.8 146.3,122.3 156.6,127.4 166.8,131.3 177.0,122.3 187.3,126.1 197.5,131.3 210.3,135.1 223.0,128.7 233.2,132.5 243.5,131.3 251.1,127.4 261.4,131.3 271.6,135.1 281.8,128.7 292.1,123.6 299.7,130.0 310.0,119.7 315.1,117.2 322.7,122.3 333.0,118.5 343.2,130.0 353.4,131.3 363.7,127.4 373.9,122.3 384.1,130.0 396.9,132.5 407.1,135.1 414.8,131.3" stroke="#c8c878" stroke-width="0.9" fill="none" stroke-dasharray="2 2" opacity="1"/><polyline points="2.6,136.4 13.3,137.7 23.6,132.5 33.8,133.8 44.0,138.9 54.3,135.1 64.5,136.4 74.7,136.4 85.0,132.5 95.2,135.1 105.4,128.7 115.6,133.8 125.9,136.4 136.1,130.0 146.3,137.7 156.6,133.8 166.8,124.9 177.0,131.3 187.3,135.1 197.5,137.7 210.3,128.7 223.0,135.1 233.2,127.4 243.5,128.7 253.7,132.5 263.9,135.1 271.6,137.7 281.8,131.3 292.1,137.7 302.3,133.8 312.5,136.4 330.4,140.2 343.2,132.5 353.4,133.8 363.7,135.1 376.5,137.7 386.7,133.8 396.9,133.8 407.1,136.4 414.8,135.1" stroke="#a0a050" stroke-width="0.9" fill="none" stroke-dasharray="2 2" opacity="1"/><polyline points="2.6,119.7 10.8,114.6 23.6,126.1 33.8,131.3 44.0,132.0 59.4,127.4 64.5,130.0 74.7,126.1 85.0,127.4 100.3,124.9 110.5,127.4 115.6,128.7 128.4,119.7 136.1,123.6 146.3,117.2 152.7,114.6 166.8,126.1 177.0,122.3 187.3,118.5 197.5,124.9 210.3,127.4 220.5,123.6 223.0,122.3 233.2,127.4 243.5,131.3 253.7,126.1 263.9,122.3 270.3,121.0 280.5,128.7 292.0,114.6 299.7,115.9 306.1,121.0 315.1,113.4 330.4,101.8 335.5,104.4 343.2,113.4 353.4,118.5 361.1,122.3 366.2,121.0 376.5,114.6 384.1,117.2 391.8,118.5 402.0,124.9 407.1,124.9 414.8,128.7" stroke="#1ca0a0" stroke-width="1.1" fill="none" opacity="1"/></svg>
<div class="t" style="left:175.5px;top:79.47px;font-size:5.9px;color:#e8e8e8;">EURUSD,H1</div>
<svg style="left:152px;top:78px" width="20" height="9" viewBox="0 0 20 9"><rect x="0" y="0" width="9" height="8" fill="#f0e0e8"/><rect x="2" y="1" width="2" height="6" fill="#e07080"/><rect x="5" y="1" width="2" height="6" fill="#8080e0"/><rect x="11" y="0" width="9" height="8" fill="#3030d0"/><rect x="15.5" y="0" width="4.5" height="8" fill="#d83030"/></svg>
<div class="t" style="left:569.5px;top:79.88px;font-size:6.3px;color:#e0e0e0;">1.1100</div>
<div class="t" style="left:569.5px;top:101.38px;font-size:6.3px;color:#e0e0e0;">1.1070</div>
<div class="t" style="left:569.5px;top:123.78px;font-size:6.3px;color:#e0e0e0;">1.1040</div>
<div class="t" style="left:569.5px;top:145.28px;font-size:6.3px;color:#e0e0e0;">1.1010</div>
<div class="a" style="left:568px;top:106.5px;width:22px;height:6px;background:#a8b8c8;"></div>
<div class="t" style="left:569.5px;top:106.48px;font-size:6.3px;color:#202020;">1.1064</div>
<div class="t" style="left:151px;top:174.57px;font-size:6.1px;color:#e8e8e8;">ADX(14) 20.21 11.38 9.76</div>
<div class="t" style="left:569.5px;top:171.48px;font-size:6.3px;color:#e0e0e0;">66.82</div>
<div class="t" style="left:569.5px;top:211.98px;font-size:6.3px;color:#e0e0e0;">6.88</div>
<div class="t" style="left:149.5px;top:221.67px;font-size:5.9px;color:#e8e8e8;">24 Jan 2020</div>
<div class="t" style="left:190px;top:221.67px;font-size:5.9px;color:#e8e8e8;">27 Jan 08:00</div>
<div class="t" style="left:231.6px;top:221.67px;font-size:5.9px;color:#e8e8e8;">28 Jan 00:00</div>
<div class="t" style="left:272.4px;top:221.67px;font-size:5.9px;color:#e8e8e8;">28 Jan 16:00</div>
<div class="t" style="left:313px;top:221.67px;font-size:5.9px;color:#e8e8e8;">29 Jan 08:00</div>
<div class="t" style="left:354px;top:221.67px;font-size:5.9px;color:#e8e8e8;">30 Jan 00:00</div>
<div class="t" style="left:396.9px;top:221.67px;font-size:5.9px;color:#e8e8e8;">30 Jan 16:00</div>
<div class="t" style="left:437.8px;top:221.67px;font-size:5.9px;color:#e8e8e8;">31 Jan 08:00</div>
<div class="t" style="left:479px;top:221.67px;font-size:5.9px;color:#e8e8e8;">3 Feb 00:00</div>
<div class="t" style="left:520px;top:221.67px;font-size:5.9px;color:#e8e8e8;">3 Feb 16:00</div>
<div class="t" style="left:562px;top:221.67px;font-size:5.9px;color:#e8e8e8;">4 Feb 08:00</div>
<div class="a" style="left:143px;top:237px;width:459px;height:1px;background:#8a8a8a;"></div>
<div class="a" style="left:143px;top:238px;width:459px;height:19px;background:#f0f0f0;"></div>
<svg style="left:148px;top:241px" width="12" height="11" viewBox="0 0 12 11"><rect x="0.5" y="0.5" width="8" height="6" fill="#e8f2fc" stroke="#3a90e0"/><rect x="2.5" y="3.5" width="9" height="7" fill="#f4f8fc" stroke="#3a90e0"/><rect x="2.5" y="3.5" width="9" height="1.5" fill="#3a90e0"/><path d="M4 9l2-2 2 1 2-2" stroke="#e87020" fill="none"/></svg>
<div class="t" style="left:161px;top:244.00px;font-size:7.3px;color:#7a7a7a;">GBPUSD,H1</div>
<div class="a" style="left:143px;top:256px;width:459px;height:163px;background:#f0f0f0;"></div>
<svg style="left:147px;top:256px" width="451" height="159"><rect x="0" y="0" width="451" height="159" fill="#000"/><path d="M2.5 145.5V2.5H419.5V145.5H2.5" stroke="#c0c0c0" stroke-width="1" fill="none"/><path d="M23.0 3V145" stroke="#a0a0a0" stroke-width="0.9" stroke-dasharray="1.2 2.8"/><path d="M43.7 3V145" stroke="#a0a0a0" stroke-width="0.9" stroke-dasharray="1.2 2.8"/><path d="M64.4 3V145" stroke="#a0a0a0" stroke-width="0.9" stroke-dasharray="1.2 2.8"/><path d="M85.1 3V145" stroke="#a0a0a0" stroke-width="0.9" stroke-dasharray="1.2 2.8"/><path d="M105.8 3V145" stroke="#a0a0a0" stroke-width="0.9" stroke-dasharray="1.2 2.8"/><path d="M126.5 3V145" stroke="#a0a0a0" stroke-width="0.9" stroke-dasharray="1.2 2.8"/><path d="M147.2 3V145" stroke="#a0a0a0" stroke-width="0.9" stroke-dasharray="1.2 2.8"/><path d="M167.9 3V145" stroke="#a0a0a0" stroke-width="0.9" stroke-dasharray="1.2 2.8"/><path d="M188.6 3V145" stroke="#a0a0a0" stroke-width="0.9" stroke-dasharray="1.2 2.8"/><path d="M209.3 3V145" stroke="#a0a0a0" stroke-width="0.9" stroke-dasharray="1.2 2.8"/><path d="M230.0 3V145" stroke="#a0a0a0" stroke-width="0.9" stroke-dasharray="1.2 2.8"/><path d="M250.7 3V145" stroke="#a0a0a0" stroke-width="0.9" stroke-dasharray="1.2 2.8"/><path d="M271.4 3V145" stroke="#a0a0a0" stroke-width="0.9" stroke-dasharray="1.2 2.8"/><path d="M292.1 3V145" stroke="#a0a0a0" stroke-width="0.9" stroke-dasharray="1.2 2.8"/><path d="M312.8 3V145" stroke="#a0a0a0" stroke-width="0.9" stroke-dasharray="1.2 2.8"/><path d="M333.5 3V145" stroke="#a0a0a0" stroke-width="0.9" stroke-dasharray="1.2 2.8"/><path d="M354.2 3V145" stroke="#a0a0a0" stroke-width="0.9" stroke-dasharray="1.2 2.8"/><path d="M374.9 3V145" stroke="#a0a0a0" stroke-width="0.9" stroke-dasharray="1.2 2.8"/><path d="M395.6 3V145" stroke="#a0a0a0" stroke-width="0.9" stroke-dasharray="1.2 2.8"/><path d="M416.3 3V145" stroke="#a0a0a0" stroke-width="0.9" stroke-dasharray="1.2 2.8"/><path d="M2.5 8.5H419.5" stroke="#a0a0a0" stroke-width="0.9" stroke-dasharray="1.5 2.5"/><path d="M2.5 30.6H419.5" stroke="#a0a0a0" stroke-width="0.9" stroke-dasharray="1.5 2.5"/><path d="M2.5 53.7H419.5" stroke="#a0a0a0" stroke-width="0.9" stroke-dasharray="1.5 2.5"/><path d="M2.5 76.6H419.5" stroke="#a0a0a0" stroke-width="0.9" stroke-dasharray="1.5 2.5"/><path d="M2.5 122.6H419.5" stroke="#a0a0a0" stroke-width="0.9" stroke-dasharray="1.5 2.5"/><polyline points="3.0,58.1 9.8,25.6 15.7,24.1 23.1,31.5 30.5,49.3 34.9,59.6 45.3,59.6 57.1,59.6 68.9,62.6 77.8,59.6 83.7,78.8 89.6,105.4 98.5,111.3 110.3,108.4 122.2,87.7 131.0,84.7 145.8,84.7 160.6,75.9 175.4,65.5 187.2,61.1 193.1,61.1 207.9,52.2 216.7,55.2 222.7,75.9 228.0,87.7 231.9,99.5 240.7,101.0 249.6,99.5 258.5,96.5 267.3,64.0 276.2,61.1 288.0,67.0 299.9,28.6 308.7,7.9 313.2,7.9 317.6,22.6 323.5,25.6 335.3,28.6 350.1,25.6 361.9,31.5 376.7,46.3 388.5,55.2 400.4,58.1 409.2,67.0 418.1,62.6" stroke="#b01c1c" stroke-width="1" fill="none" opacity="1"/><polyline points="3.0,72.9 9.8,46.3 15.7,50.7 27.6,67.0 39.4,72.9 51.2,71.4 63.0,78.8 74.9,84.7 86.7,96.5 98.5,111.3 110.3,114.3 122.2,102.5 134.0,93.6 145.8,90.6 163.5,84.7 181.3,78.8 196.0,69.9 207.9,78.8 216.7,99.5 228.0,111.3 234.8,108.4 246.6,99.5 258.5,93.6 270.3,83.2 282.1,80.3 291.0,67.0 299.9,46.3 308.7,35.9 320.5,34.5 335.3,40.4 350.1,43.3 364.9,49.3 376.7,61.1 388.5,69.9 400.4,75.9 409.2,77.3" stroke="#b01c1c" stroke-width="1" fill="none" opacity="1"/><polyline points="3.0,93.6 9.8,78.8 15.7,87.7 24.6,102.5 33.5,93.6 42.3,84.7 54.2,87.7 66.0,99.5 71.9,120.2 77.8,133.5 95.5,129.1 110.3,123.2 125.1,117.2 134.0,111.3 151.7,102.5 169.4,93.6 187.2,84.7 196.0,78.8 204.9,99.5 213.8,117.2 219.7,123.2 228.0,120.2 234.8,121.7 249.6,117.2 261.4,123.2 270.3,114.3 282.1,108.4 291.0,84.7 296.9,108.4 302.8,105.4 311.7,72.9 317.6,50.7 329.4,46.3 350.1,50.7 361.9,72.9 370.8,84.7 382.6,84.7 394.4,87.7 403.3,87.7 412.2,87.7" stroke="#b01c1c" stroke-width="1" fill="none" opacity="1"/><path d="M4.0 39.1v8.4M3.0 45.4h2M5.6 40.9v8.6M4.6 45.7h2M7.2 45.0v5.2M6.2 48.0h2M8.8 44.3v12.5M7.8 49.1h2M10.4 72.6v4.1M9.4 75.1h2M12.0 81.6v3.5M11.0 84.3h2M13.6 68.2v10.8M12.6 71.4h2M15.2 69.2v3.2M14.2 70.0h2M16.8 66.7v5.3M15.8 67.8h2M18.4 67.9v8.6M17.4 73.9h2M20.0 70.2v9.2M19.0 74.8h2M21.6 68.5v10.9M20.6 72.5h2M23.2 72.1v15.0M22.2 82.7h2M24.8 68.3v11.5M23.8 72.2h2M26.4 67.9v6.5M25.4 72.1h2M28.0 73.4v7.8M27.0 76.7h2M29.6 69.2v14.5M28.6 72.1h2M31.2 73.1v5.5M30.2 75.8h2M32.8 62.3v14.8M31.8 65.9h2M34.4 66.2v10.6M33.4 70.1h2M36.0 63.9v4.0M35.0 67.0h2M37.6 58.3v12.1M36.6 62.5h2M39.2 62.8v4.2M38.2 65.6h2M40.8 67.9v5.1M39.8 70.3h2M42.4 70.4v5.3M41.4 71.9h2M44.0 63.2v10.7M43.0 68.1h2M45.6 68.4v5.6M44.6 72.7h2M47.2 66.7v12.6M46.2 76.0h2M48.8 72.7v5.5M47.8 76.6h2M50.4 69.1v10.7M49.4 77.5h2M52.0 74.3v5.6M51.0 77.9h2M53.6 74.7v6.9M52.6 76.4h2M55.2 79.5v4.1M54.2 80.9h2M56.8 75.3v10.2M55.8 80.2h2M58.4 75.6v14.5M57.4 83.6h2M60.0 75.1v13.4M59.0 79.0h2M61.6 82.2v13.9M60.6 87.0h2M63.2 87.5v5.3M62.2 91.6h2M64.8 92.6v5.4M63.8 96.5h2M66.4 88.6v10.2M65.4 91.3h2M68.0 100.0v3.5M67.0 101.2h2M69.6 95.1v11.5M68.6 103.0h2M71.2 104.6v10.2M70.2 107.7h2M72.8 110.4v11.6M71.8 114.3h2M74.4 120.1v9.7M73.4 125.6h2M76.0 120.2v6.4M75.0 122.3h2M77.6 113.8v3.2M76.6 115.3h2M79.2 111.8v3.7M78.2 113.3h2M80.8 107.5v9.9M79.8 111.6h2M82.4 112.4v13.7M81.4 120.6h2M84.0 109.4v11.3M83.0 112.6h2M85.6 108.2v3.4M84.6 110.8h2M87.2 112.7v11.4M86.2 115.2h2M88.8 108.8v10.6M87.8 115.6h2M90.4 115.4v6.8M89.4 117.0h2M92.0 111.6v9.6M91.0 118.7h2M93.6 111.4v11.8M92.6 119.4h2M95.2 109.1v14.0M94.2 117.6h2M96.8 115.8v13.8M95.8 122.0h2M98.4 118.3v12.5M97.4 125.1h2M100.0 116.9v10.5M99.0 122.6h2M101.6 116.6v10.3M100.6 122.7h2M103.2 123.9v14.9M102.2 133.4h2M104.8 128.7v7.7M103.8 132.9h2M106.4 127.9v8.3M105.4 129.9h2M108.0 109.1v12.0M107.0 115.9h2M109.6 103.0v8.8M108.6 108.4h2M111.2 100.7v9.0M110.2 107.4h2M112.8 94.3v6.1M111.8 96.6h2M114.4 91.1v11.1M113.4 94.4h2M116.0 91.4v13.9M115.0 97.9h2M117.6 88.1v13.7M116.6 96.4h2M119.2 93.2v5.4M118.2 96.9h2M120.8 93.0v14.0M119.8 99.0h2M122.4 89.7v10.0M121.4 92.5h2M124.0 93.9v9.0M123.0 100.2h2M125.6 92.5v11.5M124.6 96.8h2M127.2 90.2v5.0M126.2 92.1h2M128.8 88.6v5.6M127.8 91.8h2M130.4 84.9v8.9M129.4 91.2h2M132.0 84.3v14.8M131.0 87.9h2M133.6 96.2v3.4M132.6 96.9h2M135.2 91.8v11.5M134.2 96.2h2M136.8 88.7v12.5M135.8 92.2h2M138.4 89.5v8.5M137.4 95.4h2M140.0 90.3v5.8M139.0 91.6h2M141.6 89.1v10.6M140.6 95.2h2M143.2 90.6v10.9M142.2 99.0h2M144.8 83.3v11.2M143.8 88.8h2M146.4 83.1v5.1M145.4 85.5h2M148.0 79.8v11.6M147.0 84.0h2M149.6 85.0v7.1M148.6 88.7h2M151.2 82.4v10.4M150.2 86.9h2M152.8 81.6v12.5M151.8 84.7h2M154.4 78.3v14.2M153.4 82.2h2M156.0 79.5v8.4M155.0 85.8h2M157.6 78.6v7.5M156.6 84.1h2M159.2 78.7v12.6M158.2 84.7h2M160.8 72.1v10.8M159.8 79.0h2M162.4 74.2v12.8M161.4 82.3h2M164.0 79.3v5.6M163.0 83.7h2M165.6 70.2v14.7M164.6 80.2h2M167.2 76.3v6.8M166.2 81.2h2M168.8 67.5v7.2M167.8 70.9h2M170.4 71.3v9.6M169.4 76.0h2M172.0 73.6v3.3M171.0 74.4h2M173.6 62.0v12.6M172.6 67.1h2M175.2 60.6v12.5M174.2 64.2h2M176.8 67.0v9.2M175.8 73.5h2M178.4 67.6v11.3M177.4 73.1h2M180.0 57.9v14.4M179.0 62.7h2M181.6 61.8v9.3M180.6 67.8h2M183.2 62.9v10.7M182.2 70.4h2M184.8 61.0v9.7M183.8 65.2h2M186.4 64.2v13.1M185.4 68.5h2M188.0 63.9v13.2M187.0 70.7h2M189.6 57.4v9.9M188.6 62.6h2M191.2 60.2v9.0M190.2 62.2h2M192.8 55.3v14.6M191.8 61.8h2M194.4 55.5v12.6M193.4 61.7h2M196.0 60.1v11.3M195.0 66.0h2M197.6 79.1v8.0M196.6 85.1h2M199.2 78.8v6.2M198.2 80.5h2M200.8 84.1v8.2M199.8 90.2h2M202.4 82.7v8.7M201.4 85.4h2M204.0 91.1v10.4M203.0 93.9h2M205.6 85.7v12.4M204.6 89.6h2M207.2 98.7v5.7M206.2 101.0h2M208.8 101.1v7.3M207.8 103.0h2M210.4 98.1v11.8M209.4 104.0h2M212.0 103.0v6.0M211.0 106.1h2M213.6 104.1v8.2M212.6 107.7h2M215.2 102.1v9.4M214.2 105.1h2M216.8 106.3v10.6M215.8 111.8h2M218.4 105.3v13.2M217.4 114.7h2M220.0 110.8v5.8M219.0 114.8h2M221.6 104.1v13.8M220.6 109.5h2M223.2 104.3v14.1M222.2 115.5h2M224.8 104.9v13.7M223.8 109.5h2M226.4 108.1v11.7M225.4 111.1h2M228.0 109.8v13.0M227.0 118.5h2M229.6 105.5v4.5M228.6 108.2h2M231.2 104.8v3.2M230.2 106.8h2M232.8 106.9v13.9M231.8 110.7h2M234.4 108.0v9.1M233.4 112.5h2M236.0 102.3v11.2M235.0 105.0h2M237.6 105.0v4.3M236.6 107.2h2M239.2 106.9v9.2M238.2 109.5h2M240.8 105.0v5.2M239.8 108.7h2M242.4 106.2v14.9M241.4 110.0h2M244.0 111.4v3.7M243.0 113.2h2M245.6 101.1v12.2M244.6 106.9h2M247.2 103.0v9.2M246.2 108.1h2M248.8 107.9v3.2M247.8 110.1h2M250.4 104.1v5.2M249.4 107.4h2M252.0 99.9v7.9M251.0 102.3h2M253.6 97.1v9.2M252.6 103.9h2M255.2 101.1v12.6M254.2 110.1h2M256.8 92.9v10.6M255.8 98.8h2M258.4 90.8v9.1M257.4 97.0h2M260.0 83.6v6.1M259.0 87.6h2M261.6 72.8v12.3M260.6 78.2h2M263.2 75.1v13.8M262.2 83.5h2M264.8 77.2v12.2M263.8 82.6h2M266.4 73.6v11.7M265.4 78.3h2M268.0 76.0v8.6M267.0 79.6h2M269.6 80.5v10.7M268.6 84.1h2M271.2 79.0v14.3M270.2 84.8h2M272.8 79.9v10.9M271.8 85.6h2M274.4 85.4v7.7M273.4 89.9h2M276.0 81.4v11.4M275.0 90.4h2M277.6 83.2v3.3M276.6 85.3h2M279.2 78.8v6.1M278.2 80.2h2M280.8 77.9v5.3M279.8 79.3h2M282.4 81.2v6.0M281.4 84.4h2M284.0 79.2v9.1M283.0 84.1h2M285.6 72.1v14.9M284.6 82.3h2M287.2 75.6v3.9M286.2 78.2h2M288.8 77.2v3.5M287.8 78.2h2M290.4 66.2v8.7M289.4 70.5h2M292.0 50.6v10.3M291.0 58.5h2M293.6 35.1v8.0M292.6 39.6h2M295.2 28.2v7.4M294.2 32.6h2M296.8 26.2v9.7M295.8 32.4h2M298.4 24.6v6.6M297.4 26.9h2M300.0 26.6v3.5M299.0 28.9h2M301.6 30.7v7.7M300.6 35.7h2M303.2 33.0v3.6M302.2 35.8h2M304.8 31.6v3.9M303.8 33.4h2M306.4 29.2v8.7M305.4 32.2h2M308.0 28.1v9.3M307.0 34.0h2M309.6 29.4v8.6M308.6 35.4h2M311.2 22.5v10.2M310.2 28.3h2M312.8 25.7v8.5M311.8 27.7h2M314.4 26.2v9.3M313.4 30.5h2M316.0 29.9v11.0M315.0 33.9h2M317.6 31.7v10.0M316.6 38.4h2M319.2 39.9v9.4M318.2 47.1h2M320.8 34.5v11.8M319.8 37.7h2M322.4 41.1v13.7M321.4 49.0h2M324.0 42.4v7.3M323.0 46.9h2M325.6 46.7v9.8M324.6 52.4h2M327.2 42.7v12.0M326.2 46.9h2M328.8 46.2v14.8M327.8 57.0h2M330.4 42.6v3.5M329.4 43.8h2M332.0 43.7v8.1M331.0 45.8h2M333.6 36.5v9.5M332.6 38.9h2M335.2 38.4v11.1M334.2 44.8h2M336.8 38.4v7.5M335.8 40.9h2M338.4 39.9v7.1M337.4 44.9h2M340.0 34.9v3.9M339.0 37.5h2M341.6 36.3v10.5M340.6 39.8h2M343.2 31.9v8.1M342.2 37.4h2M344.8 34.5v7.4M343.8 40.4h2M346.4 32.2v6.9M345.4 36.7h2M348.0 25.9v14.0M347.0 31.9h2M349.6 33.3v4.2M348.6 34.3h2M351.2 39.9v4.0M350.2 41.9h2M352.8 48.3v11.2M351.8 55.8h2M354.4 55.4v3.9M353.4 57.7h2M356.0 58.3v4.0M355.0 60.8h2M357.6 56.6v11.3M356.6 59.8h2M359.2 64.7v7.3M358.2 67.8h2M360.8 68.1v4.4M359.8 70.5h2M362.4 67.1v14.0M361.4 77.6h2M364.0 69.6v8.3M363.0 72.7h2M365.6 67.5v6.8M364.6 72.7h2M367.2 63.4v13.7M366.2 69.2h2M368.8 68.5v7.4M367.8 71.7h2M370.4 67.6v7.7M369.4 71.7h2M372.0 69.1v12.6M371.0 77.9h2M373.6 68.0v9.8M372.6 74.4h2M375.2 64.6v13.6M374.2 67.5h2M376.8 66.4v9.2M375.8 71.4h2M378.4 62.0v14.6M377.4 71.9h2M380.0 63.7v3.8M379.0 66.2h2M381.6 56.6v4.0M380.6 59.2h2M383.2 49.0v13.8M382.2 57.0h2M384.8 61.2v4.7M383.8 64.0h2M386.4 63.4v5.9M385.4 67.3h2M388.0 74.1v9.3M387.0 78.1h2M389.6 79.8v7.1M388.6 84.0h2M391.2 75.4v8.9M390.2 81.0h2M392.8 77.9v11.5M391.8 83.0h2M394.4 75.3v12.9M393.4 84.5h2M396.0 77.3v12.7M395.0 86.6h2M397.6 75.1v14.5M396.6 82.5h2M399.2 78.4v11.5M398.2 83.7h2M400.8 74.3v8.0M399.8 79.5h2M402.4 71.8v14.9M401.4 76.3h2M404.0 75.9v5.5M403.0 78.0h2M405.6 67.0v14.6M404.6 72.6h2M407.2 76.3v4.4M406.2 79.3h2M408.8 69.6v5.2M407.8 72.1h2M410.4 79.2v10.0M409.4 81.5h2M412.0 82.0v4.3M411.0 83.4h2M413.6 92.4v5.8M412.6 95.6h2M415.2 94.1v5.7M414.2 96.2h2M416.8 105.9v5.1M415.8 107.9h2M418.4 109.4v9.6M417.4 114.1h2" stroke="#1c8a1c" stroke-width="1.1"/><polyline points="2.4,40.4 8.3,49.3 11.3,81.8 14.3,69.9 18.7,72.9 24.6,75.9 30.5,72.9 36.4,67.0 40.9,69.9 45.3,72.9 51.2,78.8 57.1,81.8 63.0,87.7 68.9,99.5 73.4,123.2 77.8,117.2 83.7,114.3 92.6,114.3 100.0,123.2 105.9,132.0 110.3,105.4 116.2,96.5 122.2,96.5 131.0,90.6 136.9,99.5 145.8,90.6 151.7,84.7 163.5,78.8 175.4,69.9 187.2,67.0 194.6,61.1 197.5,78.8 202.0,87.7 210.8,108.4 219.7,111.3 228.0,117.2 228.9,108.4 237.8,111.3 246.6,108.4 255.5,105.4 261.4,75.9 267.3,84.7 276.2,84.7 285.1,78.8 291.0,72.9 293.9,34.5 299.9,31.5 308.7,28.6 317.6,37.4 326.5,52.2 335.3,43.3 344.2,37.4 350.1,31.5 353.1,58.1 361.9,69.9 373.8,75.9 384.1,58.1 388.5,78.8 400.4,81.8 409.2,75.9 418.1,111.3" stroke="#2aa02a" stroke-width="1" fill="none" opacity="1"/><path d="M2.5 100.5H419.5" stroke="#586070" stroke-width="1.8"/><path d="M2.5 100.5H419.5" stroke="#3a9a3a" stroke-width="0.9" stroke-dasharray="4 3"/><path d="M3.0 37.4h0M5.1 40.0h0M7.2 42.2h0M9.3 44.3h0M11.4 46.4h0M13.5 49.2h0M15.6 53.4h0M17.7 57.6h0M19.8 61.8h0M21.9 65.8h0M24.0 68.6h0M26.1 71.4h0M5.4 62.6h0M8.3 64.0h0M24.6 101.0h0M26.7 100.5h0M28.8 99.9h0M30.9 99.1h0M33.0 97.0h0M35.1 94.9h0M37.2 92.5h0M39.3 89.3h0M41.4 86.2h0M43.4 84.0h0M45.5 82.6h0M47.6 82.2h0M49.7 83.2h0M39.4 59.6h0M42.3 60.3h0M45.3 61.1h0M49.7 55.2h0M51.9 56.0h0M54.0 56.9h0M56.1 57.7h0M58.2 59.2h0M60.4 61.4h0M62.5 64.2h0M64.6 68.0h0M66.7 71.9h0M68.9 75.7h0M71.0 82.0h0M73.1 88.3h0M75.2 95.3h0M77.3 105.2h0M79.5 114.9h0M81.6 122.0h0M83.7 129.1h0M77.8 133.5h0M79.9 132.8h0M81.9 132.1h0M84.0 131.4h0M86.1 130.7h0M88.2 129.2h0M90.2 127.4h0M92.3 125.6h0M94.4 123.8h0M96.4 122.0h0M98.5 120.2h0M98.5 108.4h0M101.5 109.8h0M104.4 111.3h0M105.9 136.5h0M108.0 135.0h0M110.1 133.5h0M112.1 132.0h0M114.2 130.5h0M116.3 129.0h0M118.4 126.2h0M120.5 123.4h0M122.6 120.6h0M124.6 117.9h0M126.7 115.1h0M128.8 112.3h0M130.9 109.5h0M133.0 106.8h0M135.0 104.0h0M137.1 101.2h0M139.2 98.4h0M141.3 95.7h0M143.4 93.0h0M145.5 90.5h0M147.5 88.1h0M149.6 85.7h0M151.7 83.2h0M139.9 118.7h0M141.9 117.4h0M143.9 116.0h0M146.0 114.7h0M148.0 113.3h0M150.0 111.2h0M152.0 108.5h0M154.1 105.9h0M156.1 103.3h0M158.1 100.6h0M160.1 98.0h0M162.2 95.4h0M164.2 93.4h0M166.2 92.7h0M168.2 92.0h0M170.3 91.3h0M172.3 90.7h0M174.3 89.2h0M176.3 87.7h0M178.4 86.2h0M180.4 84.6h0M182.4 83.1h0M184.4 81.7h0M186.5 80.8h0M188.5 79.9h0M190.5 79.1h0M192.5 78.2h0M194.6 77.3h0M196.0 43.3h0M198.1 45.9h0M200.2 48.5h0M202.2 51.3h0M204.3 55.9h0M206.3 60.5h0M208.4 65.5h0M210.4 71.7h0M212.5 77.9h0M214.5 84.0h0M216.6 90.2h0M218.6 96.3h0M220.7 102.4h0M222.8 108.2h0M224.8 114.1h0M226.9 120.0h0M228.9 132.0h0M227.4 132.0h0M229.5 131.2h0M231.5 130.4h0M233.6 129.6h0M235.7 128.4h0M237.7 126.9h0M239.8 125.4h0M241.8 123.8h0M243.9 122.3h0M245.9 120.7h0M248.0 119.4h0M250.1 118.1h0M252.1 116.8h0M254.2 115.5h0M256.2 114.2h0M258.3 112.9h0M260.3 109.5h0M262.4 105.9h0M264.4 102.3h0M266.5 96.1h0M268.6 89.9h0M270.6 84.1h0M272.7 80.0h0M274.7 75.9h0M271.8 62.6h0M274.1 64.0h0M276.5 65.5h0M278.9 67.0h0M281.2 68.5h0M283.6 69.9h0M283.6 89.2h0M285.7 88.7h0M287.7 88.3h0M289.8 87.9h0M291.9 85.0h0M293.9 78.8h0M296.0 72.6h0M298.1 66.7h0M300.2 61.0h0M302.2 55.3h0M304.3 51.0h0M306.4 47.3h0M308.4 43.6h0M310.5 39.9h0M312.6 36.4h0M314.6 33.0h0M308.7 22.6h0M310.8 23.5h0M312.9 24.3h0M314.9 25.1h0M317.0 25.8h0M319.1 26.2h0M321.1 26.6h0M323.2 27.0h0M325.3 28.0h0M327.3 29.0h0M329.4 30.0h0M331.5 32.8h0M333.6 35.6h0M335.6 37.3h0M337.7 38.8h0M339.8 40.4h0M316.1 41.9h0M319.1 42.3h0M322.0 42.7h0M333.8 55.2h0M335.9 54.8h0M337.9 54.4h0M339.9 53.9h0M342.0 53.4h0M344.0 52.8h0M346.0 52.1h0M348.1 51.4h0M350.1 50.7h0M351.6 10.8h0M353.6 13.2h0M355.6 15.6h0M357.6 18.0h0M359.6 21.0h0M361.6 25.0h0M363.6 29.0h0M365.6 33.4h0M367.6 38.4h0M369.6 43.4h0M371.6 48.4h0M373.6 53.4h0M375.7 58.4h0M377.7 63.9h0M379.7 69.9h0M379.7 78.8h0M381.9 77.3h0M384.1 75.9h0M384.1 50.7h0M386.3 52.5h0M388.5 54.3h0M390.8 56.0h0M393.0 59.2h0M395.2 63.1h0M397.4 67.0h0M399.6 71.4h0M401.8 75.9h0M400.4 86.2h0M402.8 86.7h0M405.3 87.2h0M407.7 87.7h0M407.7 72.9h0M409.8 75.0h0M411.9 77.0h0M414.0 79.3h0M416.0 82.8h0M418.1 86.2h0" stroke="#3cf03c" stroke-width="3.7" stroke-linecap="round"/></svg>
<div class="t" style="left:175.5px;top:261.67px;font-size:5.9px;color:#e8e8e8;">GBPUSD,H1</div>
<svg style="left:152px;top:261px" width="20" height="8" viewBox="0 0 20 8"><rect x="0" y="0" width="9" height="8" fill="#f0e0e8"/><rect x="2" y="1" width="2" height="6" fill="#e07080"/><rect x="5" y="1" width="2" height="6" fill="#8080e0"/><rect x="11" y="0" width="9" height="8" fill="#3030d0"/><rect x="15.5" y="0" width="4.5" height="8" fill="#d83030"/></svg>
<div class="t" style="left:150px;top:349.52px;font-size:6.2px;color:#d0d0d0;">#11392292 buy 3.00</div>
<div class="t" style="left:569.5px;top:261.48px;font-size:6.3px;color:#e0e0e0;">1.3180</div>
<div class="t" style="left:569.5px;top:283.58px;font-size:6.3px;color:#e0e0e0;">1.3140</div>
<div class="t" style="left:569.5px;top:306.68px;font-size:6.3px;color:#e0e0e0;">1.3100</div>
<div class="t" style="left:569.5px;top:329.58px;font-size:6.3px;color:#e0e0e0;">1.3060</div>
<div class="t" style="left:569.5px;top:375.58px;font-size:6.3px;color:#e0e0e0;">1.2980</div>
<div class="a" style="left:568px;top:354px;width:22px;height:6px;background:#a8b8c8;"></div>
<div class="t" style="left:569.5px;top:353.98px;font-size:6.3px;color:#202020;">1.3018</div>
<div class="t" style="left:149px;top:405.17px;font-size:5.9px;color:#e8e8e8;">9 Jan 2020</div>
<div class="t" style="left:190px;top:405.17px;font-size:5.9px;color:#e8e8e8;">10 Jan 13:00</div>
<div class="t" style="left:232px;top:405.17px;font-size:5.9px;color:#e8e8e8;">13 Jan 21:00</div>
<div class="t" style="left:273px;top:405.17px;font-size:5.9px;color:#e8e8e8;">15 Jan 05:00</div>
<div class="t" style="left:314px;top:405.17px;font-size:5.9px;color:#e8e8e8;">16 Jan 13:00</div>
<div class="t" style="left:355px;top:405.17px;font-size:5.9px;color:#e8e8e8;">17 Jan 21:00</div>
<div class="t" style="left:396.6px;top:405.17px;font-size:5.9px;color:#e8e8e8;">21 Jan 05:00</div>
<div class="t" style="left:437px;top:405.17px;font-size:5.9px;color:#e8e8e8;">22 Jan 13:00</div>
<div class="t" style="left:478px;top:405.17px;font-size:5.9px;color:#e8e8e8;">23 Jan 21:00</div>
<div class="t" style="left:520px;top:405.17px;font-size:5.9px;color:#e8e8e8;">27 Jan 05:00</div>
<div class="t" style="left:561px;top:405.17px;font-size:5.9px;color:#e8e8e8;">28 Jan 13:00</div>
<div class="a" style="left:143px;top:419px;width:460px;height:1px;background:#a0a0a0;"></div>
<div class="a" style="left:143px;top:420px;width:460px;height:13px;background:#f0f0f0;"></div>
<div class="a" style="left:198px;top:420px;width:405px;height:1px;background:#505050;"></div>
<div class="a" style="left:144px;top:420px;width:54px;height:13px;background:#fff;border:1px solid #404040;border-top:none;border-left-width:1.5px;border-bottom-width:1.5px"></div>
<div class="t" style="left:151px;top:423.14px;font-size:7.0px;color:#222;">EURUSD,H1</div>
<div class="t" style="left:206px;top:423.14px;font-size:7.0px;color:#9a9a9a;">GBPUSD,H1</div>
<div class="a" style="left:602px;top:53px;width:1px;height:381px;background:#909090;"></div>
<div class="a" style="left:604px;top:53px;width:296px;height:381px;background:#f0f0f0;"></div>
<div class="a" style="left:898px;top:53px;width:2px;height:381px;background:#808080;"></div>
<div class="a" style="left:606px;top:54px;width:1px;height:187px;background:#a0a0a0;"></div>
<div class="a" style="left:607px;top:55px;width:291px;height:186px;background:#fff;"></div>
<div class="a" style="left:607px;top:55px;width:283px;height:9px;background:#d6e2f0;"></div>
<div class="t" style="left:607.5px;top:56.33px;font-size:6.6px;color:#1a1a1a;">EURUSD, Euro vs US Dollar</div>
<svg style="left:891px;top:57px" width="6" height="6" viewBox="0 0 6 6"><path d="M0.5 0.5l5 5M5.5 0.5l-5 5" stroke="#111" stroke-width="1.3"/></svg>
<div class="a" style="left:607px;top:64px;width:291px;height:17px;background:#f0f0f0;"></div>
<div class="a" style="left:607px;top:64px;width:291px;height:1px;background:#d8d8d8;"></div>
<div class="a" style="left:606px;top:65px;width:18px;height:14.5px;background:#cce4f7;"></div>
<svg style="left:610px;top:67px" width="10" height="11" viewBox="0 0 10 11"><rect x="0.5" y="0.5" width="9" height="10" fill="#fff" stroke="#5090d0"/><path d="M2 4l2-2 2 2 2-2M2 8l2-2 2 2 2-2" stroke="#e04040" stroke-width="0.9" fill="none"/><path d="M2 8l2-2 2 2 2-2" stroke="#3060d0" stroke-width="0.9" fill="none"/></svg>
<svg style="left:628px;top:66px" width="12" height="12" viewBox="0 0 12 12"><rect x="0.5" y="0.5" width="9" height="9" fill="#fff" stroke="#909090"/><path d="M0.5 3.5h9M0.5 6.5h9M3.5 0.5v9M6.5 0.5v9" stroke="#a0a0a0"/><circle cx="8.5" cy="8.5" r="3" fill="#fff" stroke="#707070"/></svg>
<div class="a" style="left:644px;top:66px;width:1px;height:13px;background:#a8a8a8;"></div>
<svg style="left:650px;top:67px" width="12" height="11" viewBox="0 0 12 11"><rect x="0.5" y="0.5" width="9" height="7" fill="#e8f4ff" stroke="#3a86d6"/><path d="M2 5l2-2 2 2 2-2" stroke="#3aa03a" fill="none"/><path d="M7 7a2.5 2.5 0 1 0 4 2" stroke="#d03020" stroke-width="1.8" fill="none"/></svg>
<svg style="left:668px;top:67px" width="6" height="11" viewBox="0 0 6 11"><rect x="0.5" y="1.5" width="5" height="8" rx="1" fill="none" stroke="#b0b0b0"/><path d="M0.5 4.5h5M0.5 6.5h5" stroke="#b0b0b0"/></svg>
<svg style="left:685px;top:67px" width="11" height="11" viewBox="0 0 11 11"><path d="M5.5 0.5h5v10h-5M0.5 3l2-2 2 2M2.5 1v5M0.5 8l2 2 2-2" stroke="#a0a0a0" fill="none"/></svg>
<div class="a" style="left:702px;top:66px;width:1px;height:13px;background:#a8a8a8;"></div>
<div class="a" style="left:705px;top:65px;width:17px;height:15px;background:#cce4f7;"></div>
<svg style="left:708px;top:67px" width="12" height="11" viewBox="0 0 12 11"><path d="M0 5h3l1.5-3 2 6 1.5-3h4" stroke="#e04040" fill="none"/><path d="M0 9h3l2-2 2 3 2-2h3" stroke="#3060d0" fill="none"/></svg>
<div class="a" style="left:723px;top:65px;width:17px;height:15px;background:#cce4f7;"></div>
<svg style="left:726px;top:67px" width="12" height="11" viewBox="0 0 12 11"><circle cx="4" cy="3.5" r="3" fill="#d0d0d0" stroke="#a0a0a0"/><circle cx="5" cy="8" r="3" fill="#c8c8c8" stroke="#a0a0a0"/><circle cx="9" cy="8" r="3" fill="#c8c8c8" stroke="#a0a0a0"/></svg>
<svg style="left:745px;top:67px" width="11" height="11" viewBox="0 0 11 11"><circle cx="4.5" cy="4.5" r="3.8" fill="#fff" stroke="#2a70c0" stroke-width="1.2"/><circle cx="4.5" cy="4.5" r="1.8" fill="#2a70c0"/><path d="M7.5 7.5l3 3" stroke="#c89020" stroke-width="1.6"/></svg>
<svg style="left:763px;top:67px" width="11" height="11" viewBox="0 0 11 11"><circle cx="4.5" cy="4.5" r="3.8" fill="#fff" stroke="#2a70c0" stroke-width="1.2"/><path d="M2.5 4.5h4" stroke="#2a70c0" stroke-width="1.3"/><path d="M7.5 7.5l3 3" stroke="#c89020" stroke-width="1.6"/></svg>
<div class="a" style="left:607px;top:81px;width:291px;height:1px;background:#d8d8d8;"></div>
<svg style="left:607px;top:82px" width="145" height="131"><path d="M20.3 12.700000000000003V119.10000000000002" stroke="#d8d8d8" stroke-width="0.8" stroke-dasharray="2 2"/><path d="M41.1 12.700000000000003V119.10000000000002" stroke="#d8d8d8" stroke-width="0.8" stroke-dasharray="2 2"/><path d="M61.9 12.700000000000003V119.10000000000002" stroke="#d8d8d8" stroke-width="0.8" stroke-dasharray="2 2"/><path d="M82.7 12.700000000000003V119.10000000000002" stroke="#d8d8d8" stroke-width="0.8" stroke-dasharray="2 2"/><path d="M103.5 12.700000000000003V119.10000000000002" stroke="#d8d8d8" stroke-width="0.8" stroke-dasharray="2 2"/><path d="M124.3 12.700000000000003V119.10000000000002" stroke="#d8d8d8" stroke-width="0.8" stroke-dasharray="2 2"/><path d="M0 15.7H145" stroke="#d8d8d8" stroke-width="0.8" stroke-dasharray="2 2"/><path d="M0 28.5H145" stroke="#d8d8d8" stroke-width="0.8" stroke-dasharray="2 2"/><path d="M0 41.3H145" stroke="#d8d8d8" stroke-width="0.8" stroke-dasharray="2 2"/><path d="M0 54.1H145" stroke="#d8d8d8" stroke-width="0.8" stroke-dasharray="2 2"/><path d="M0 66.9H145" stroke="#d8d8d8" stroke-width="0.8" stroke-dasharray="2 2"/><path d="M0 79.7H145" stroke="#d8d8d8" stroke-width="0.8" stroke-dasharray="2 2"/><path d="M0 92.5H145" stroke="#d8d8d8" stroke-width="0.8" stroke-dasharray="2 2"/><path d="M0 105.3H145" stroke="#d8d8d8" stroke-width="0.8" stroke-dasharray="2 2"/><path d="M0 118.1H145" stroke="#d8d8d8" stroke-width="0.8" stroke-dasharray="2 2"/><polyline points="0.0,68.0 2.4,73.5 4.8,68.0 7.1,73.5 9.5,68.0 11.9,73.5 14.3,68.0 16.7,73.5 19.0,68.0 21.4,73.5 23.8,68.0 26.2,73.5 28.6,68.0 30.9,73.5 33.3,68.0 35.7,73.5 38.1,68.0 40.5,73.5 42.8,68.0 45.2,73.5 47.6,68.0 50.0,73.5 52.4,68.0 54.7,73.5 57.1,68.0 59.5,73.5 61.9,68.0 64.3,73.5 66.6,68.0 71.0,73.8 75.0,68.0 79.0,73.8 83.0,67.7 88.0,67.7 88.0,67.7 90.4,61.3 92.7,67.7 95.1,61.3 97.4,67.7 99.8,61.3 102.1,67.7 104.5,61.3 106.8,67.7 109.2,61.3 111.5,67.7 113.9,61.3 116.2,67.7 118.6,61.3 120.9,67.7 122.0,60.5 143.0,60.5" stroke="#e85050" stroke-width="1.3" fill="none"/><polyline points="0.0,112.2 2.4,100.5 4.8,112.2 7.1,100.5 9.5,112.2 11.9,100.5 14.3,112.2 16.7,100.5 19.0,112.2 21.4,100.5 23.8,112.2 26.2,100.5 28.6,112.2 30.9,100.5 33.3,112.2 35.7,100.5 38.1,112.2 40.5,100.5 42.8,112.2 45.2,100.5 47.6,112.2 50.0,100.5 52.4,112.2 54.7,100.5 57.1,112.2 59.5,100.5 61.9,112.2 64.3,100.5 66.6,112.2 70.0,112.2 74.5,100.0 78.7,112.2 82.8,87.0 85.3,99.0 90.3,74.7 92.6,86.3 95.0,74.7 97.4,86.3 99.7,74.7 102.1,86.3 104.4,74.7 106.8,86.3 109.1,74.7 111.5,86.3 113.8,74.7 116.2,86.3 118.5,74.7 120.9,86.3 122.0,73.8 143.0,73.8" stroke="#1a5ad8" stroke-width="1.6" fill="none"/></svg>
<div class="a" style="left:607px;top:213px;width:145px;height:1px;background:#d0d0d0;"></div>
<div class="a" style="left:752px;top:82px;width:1px;height:159px;background:#707070;"></div>
<div class="a" style="left:752px;top:82px;width:1px;height:0px;background:#000;"></div>
<div class="a" style="left:753px;top:82px;width:145px;height:16.5px;background:#fff;"></div>
<div class="a" style="left:826px;top:82px;width:1px;height:16.5px;background:#ececec;"></div>
<div class="t" style="left:689px;width:200px;text-align:center;top:87.54px;font-size:7.2px;color:#222;">Цена</div>
<div class="t" style="left:761.5px;width:200px;text-align:center;top:87.45px;font-size:7.4px;color:#222;">Торговля</div>
<div class="a" style="left:753px;top:98.50px;width:73px;height:12.85px;background:#fbe2fb;border-bottom:1px solid #f2d4f2"></div>
<div class="a" style="left:826px;top:98.50px;width:72px;height:12.85px;background:#fff;border-bottom:1px solid #ececec"></div>
<div class="t" style="left:689px;width:200px;text-align:center;top:101.04px;font-size:7.2px;color:#2a2a2a;letter-spacing:0.2px;">1.1070</div>
<div class="a" style="left:827px;top:99.70px;width:10px;height:10px;background:#fff;border:1px solid #e0e0e0"></div>
<div class="a" style="left:886px;top:99.70px;width:10px;height:10px;background:#fff;border:1px solid #e0e0e0"></div>
<svg style="left:828.5px;top:102px" width="7" height="5" viewBox="0 0 7 5"><path d="M1 1.5l2.5 2 2.5-2" stroke="#e02020" stroke-width="1.2" fill="none"/></svg>
<svg style="left:887.5px;top:102px" width="7" height="5" viewBox="0 0 7 5"><path d="M1 3.5l2.5-2 2.5 2" stroke="#3040d0" stroke-width="1.2" fill="none"/></svg>
<div class="a" style="left:753px;top:111.35px;width:73px;height:12.85px;background:#fbe2fb;border-bottom:1px solid #f2d4f2"></div>
<div class="a" style="left:826px;top:111.35px;width:72px;height:12.85px;background:#fff;border-bottom:1px solid #ececec"></div>
<div class="t" style="left:689px;width:200px;text-align:center;top:113.89px;font-size:7.2px;color:#2a2a2a;letter-spacing:0.2px;">1.1069</div>
<div class="a" style="left:827px;top:112.55px;width:10px;height:10px;background:#fff;border:1px solid #e0e0e0"></div>
<div class="a" style="left:886px;top:112.55px;width:10px;height:10px;background:#fff;border:1px solid #e0e0e0"></div>
<svg style="left:828.5px;top:115px" width="7" height="5" viewBox="0 0 7 5"><path d="M1 1.5l2.5 2 2.5-2" stroke="#e02020" stroke-width="1.2" fill="none"/></svg>
<svg style="left:887.5px;top:115px" width="7" height="5" viewBox="0 0 7 5"><path d="M1 3.5l2.5-2 2.5 2" stroke="#a0a0a0" stroke-width="1.2" fill="none"/></svg>
<div class="a" style="left:753px;top:124.20px;width:73px;height:12.85px;background:#fbe2fb;border-bottom:1px solid #f2d4f2"></div>
<div class="a" style="left:826px;top:124.20px;width:72px;height:12.85px;background:#fff;border-bottom:1px solid #ececec"></div>
<div class="t" style="left:689px;width:200px;text-align:center;top:126.74px;font-size:7.2px;color:#2a2a2a;letter-spacing:0.2px;">1.1068</div>
<div class="a" style="left:827px;top:125.40px;width:10px;height:10px;background:#fff;border:1px solid #e0e0e0"></div>
<div class="a" style="left:886px;top:125.40px;width:10px;height:10px;background:#fff;border:1px solid #e0e0e0"></div>
<svg style="left:828.5px;top:128px" width="7" height="5" viewBox="0 0 7 5"><path d="M1 1.5l2.5 2 2.5-2" stroke="#e02020" stroke-width="1.2" fill="none"/></svg>
<svg style="left:887.5px;top:128px" width="7" height="5" viewBox="0 0 7 5"><path d="M1 3.5l2.5-2 2.5 2" stroke="#a0a0a0" stroke-width="1.2" fill="none"/></svg>
<div class="a" style="left:753px;top:137.05px;width:73px;height:12.85px;background:#fbe2fb;border-bottom:1px solid #f2d4f2"></div>
<div class="a" style="left:826px;top:137.05px;width:72px;height:12.85px;background:#fff;border-bottom:1px solid #ececec"></div>
<div class="t" style="left:689px;width:200px;text-align:center;top:139.59px;font-size:7.2px;color:#2a2a2a;letter-spacing:0.2px;">1.1067</div>
<div class="a" style="left:827px;top:138.25px;width:10px;height:10px;background:#fff;border:1px solid #e0e0e0"></div>
<div class="a" style="left:886px;top:138.25px;width:10px;height:10px;background:#fff;border:1px solid #e0e0e0"></div>
<svg style="left:828.5px;top:141px" width="7" height="5" viewBox="0 0 7 5"><path d="M1 1.5l2.5 2 2.5-2" stroke="#e02020" stroke-width="1.2" fill="none"/></svg>
<svg style="left:887.5px;top:141px" width="7" height="5" viewBox="0 0 7 5"><path d="M1 3.5l2.5-2 2.5 2" stroke="#a0a0a0" stroke-width="1.2" fill="none"/></svg>
<div class="a" style="left:753px;top:149.90px;width:73px;height:12.85px;background:#d6e4f8;border-bottom:1px solid #c4d4ec"></div>
<div class="a" style="left:826px;top:149.90px;width:72px;height:12.85px;background:#fff;border-bottom:1px solid #ececec"></div>
<div class="t" style="left:689px;width:200px;text-align:center;top:152.44px;font-size:7.2px;color:#2a2a2a;letter-spacing:0.2px;">1.1064</div>
<div class="a" style="left:827px;top:151.10px;width:10px;height:10px;background:#fff;border:1px solid #e0e0e0"></div>
<div class="a" style="left:886px;top:151.10px;width:10px;height:10px;background:#fff;border:1px solid #e0e0e0"></div>
<svg style="left:828.5px;top:154px" width="7" height="5" viewBox="0 0 7 5"><path d="M1 1.5l2.5 2 2.5-2" stroke="#a0a0a0" stroke-width="1.2" fill="none"/></svg>
<svg style="left:887.5px;top:154px" width="7" height="5" viewBox="0 0 7 5"><path d="M1 3.5l2.5-2 2.5 2" stroke="#3040d0" stroke-width="1.2" fill="none"/></svg>
<div class="a" style="left:753px;top:162.75px;width:73px;height:12.85px;background:#d6e4f8;border-bottom:1px solid #c4d4ec"></div>
<div class="a" style="left:826px;top:162.75px;width:72px;height:12.85px;background:#fff;border-bottom:1px solid #ececec"></div>
<div class="t" style="left:689px;width:200px;text-align:center;top:165.29px;font-size:7.2px;color:#2a2a2a;letter-spacing:0.2px;">1.1063</div>
<div class="a" style="left:827px;top:163.95px;width:10px;height:10px;background:#fff;border:1px solid #e0e0e0"></div>
<div class="a" style="left:886px;top:163.95px;width:10px;height:10px;background:#fff;border:1px solid #e0e0e0"></div>
<svg style="left:828.5px;top:167px" width="7" height="5" viewBox="0 0 7 5"><path d="M1 1.5l2.5 2 2.5-2" stroke="#a0a0a0" stroke-width="1.2" fill="none"/></svg>
<svg style="left:887.5px;top:167px" width="7" height="5" viewBox="0 0 7 5"><path d="M1 3.5l2.5-2 2.5 2" stroke="#3040d0" stroke-width="1.2" fill="none"/></svg>
<div class="a" style="left:753px;top:175.60px;width:73px;height:12.85px;background:#d6e4f8;border-bottom:1px solid #c4d4ec"></div>
<div class="a" style="left:826px;top:175.60px;width:72px;height:12.85px;background:#fff;border-bottom:1px solid #ececec"></div>
<div class="t" style="left:689px;width:200px;text-align:center;top:178.14px;font-size:7.2px;color:#2a2a2a;letter-spacing:0.2px;">1.1062</div>
<div class="a" style="left:827px;top:176.80px;width:10px;height:10px;background:#fff;border:1px solid #e0e0e0"></div>
<div class="a" style="left:886px;top:176.80px;width:10px;height:10px;background:#fff;border:1px solid #e0e0e0"></div>
<svg style="left:828.5px;top:180px" width="7" height="5" viewBox="0 0 7 5"><path d="M1 1.5l2.5 2 2.5-2" stroke="#a0a0a0" stroke-width="1.2" fill="none"/></svg>
<svg style="left:887.5px;top:180px" width="7" height="5" viewBox="0 0 7 5"><path d="M1 3.5l2.5-2 2.5 2" stroke="#3040d0" stroke-width="1.2" fill="none"/></svg>
<div class="a" style="left:753px;top:188.45px;width:73px;height:12.85px;background:#d6e4f8;border-bottom:1px solid #c4d4ec"></div>
<div class="a" style="left:826px;top:188.45px;width:72px;height:12.85px;background:#fff;border-bottom:1px solid #ececec"></div>
<div class="t" style="left:689px;width:200px;text-align:center;top:190.99px;font-size:7.2px;color:#2a2a2a;letter-spacing:0.2px;">1.1061</div>
<div class="a" style="left:827px;top:189.65px;width:10px;height:10px;background:#fff;border:1px solid #e0e0e0"></div>
<div class="a" style="left:886px;top:189.65px;width:10px;height:10px;background:#fff;border:1px solid #e0e0e0"></div>
<svg style="left:828.5px;top:192px" width="7" height="5" viewBox="0 0 7 5"><path d="M1 1.5l2.5 2 2.5-2" stroke="#e02020" stroke-width="1.2" fill="none"/></svg>
<svg style="left:887.5px;top:192px" width="7" height="5" viewBox="0 0 7 5"><path d="M1 3.5l2.5-2 2.5 2" stroke="#3040d0" stroke-width="1.2" fill="none"/></svg>
<div class="a" style="left:753px;top:149px;width:145px;height:1.5px;background:#404040;"></div>
<div class="a" style="left:753px;top:213px;width:145px;height:14px;background:#ececec;"></div>
<div class="a" style="left:753px;top:214px;width:11px;height:12px;background:#e6e6e6"></div>
<svg style="left:756px;top:218px" width="6" height="5" viewBox="0 0 6 5"><path d="M1 1.5h4L3 4z" fill="#111"/></svg>
<div class="a" style="left:765px;top:213.5px;width:23px;height:13px;background:#fff;border:1px solid #adadad"></div>
<div class="t" style="left:768px;top:216.50px;font-size:7.3px;color:#a0a0a0;">sl</div>
<div class="t" style="right:115px;top:216.45px;font-size:7.4px;color:#1a1a1a;">0</div>
<div class="a" style="left:789px;top:214px;width:11px;height:12px;background:#e6e6e6"></div>
<svg style="left:792px;top:218px" width="6" height="5" viewBox="0 0 6 5"><path d="M1 3.5h4L3 1z" fill="#111"/></svg>
<div class="a" style="left:802px;top:214px;width:11px;height:12px;background:#e6e6e6"></div>
<svg style="left:805px;top:218px" width="6" height="5" viewBox="0 0 6 5"><path d="M1 1.5h4L3 4z" fill="#111"/></svg>
<div class="a" style="left:813px;top:213.5px;width:24px;height:13px;background:#fff;border:1px solid #adadad"></div>
<div class="t" style="right:66px;top:216.45px;font-size:7.4px;color:#1a1a1a;">3.00</div>
<div class="a" style="left:838px;top:214px;width:11px;height:12px;background:#e6e6e6"></div>
<svg style="left:841px;top:218px" width="6" height="5" viewBox="0 0 6 5"><path d="M1 3.5h4L3 1z" fill="#111"/></svg>
<div class="a" style="left:851px;top:214px;width:11px;height:12px;background:#e6e6e6"></div>
<svg style="left:854px;top:218px" width="6" height="5" viewBox="0 0 6 5"><path d="M1 1.5h4L3 4z" fill="#111"/></svg>
<div class="a" style="left:862px;top:213.5px;width:23px;height:13px;background:#fff;border:1px solid #adadad"></div>
<div class="t" style="left:865px;top:216.50px;font-size:7.3px;color:#a0a0a0;">tp</div>
<div class="t" style="right:18px;top:216.45px;font-size:7.4px;color:#1a1a1a;">0</div>
<div class="a" style="left:886px;top:214px;width:11px;height:12px;background:#e6e6e6"></div>
<svg style="left:889px;top:218px" width="6" height="5" viewBox="0 0 6 5"><path d="M1 3.5h4L3 1z" fill="#111"/></svg>
<div class="a" style="left:753px;top:227px;width:47px;height:13px;background:linear-gradient(#f09a9a,#dc6666);border:1px solid #c05050"></div>
<div class="t" style="left:676.5px;width:200px;text-align:center;top:230.15px;font-size:7.4px;color:#3a1010;">Sell</div>
<div class="a" style="left:801px;top:227px;width:48px;height:13px;background:#ececec;border:1px solid #dcdcdc"></div>
<div class="t" style="left:725px;width:200px;text-align:center;top:230.15px;font-size:7.4px;color:#9a9a9a;">Закрыть</div>
<div class="a" style="left:850px;top:227px;width:48px;height:13px;background:linear-gradient(#a8c0ea,#7090d0);border:1px solid #6080c0"></div>
<div class="t" style="left:774px;width:200px;text-align:center;top:230.15px;font-size:7.4px;color:#102040;">Buy</div>
<div class="a" style="left:604px;top:243px;width:294px;height:1px;background:#b0b0b0;"></div>
<div class="a" style="left:606px;top:242px;width:1px;height:191px;background:#a0a0a0;"></div>
<div class="a" style="left:607px;top:245px;width:291px;height:188px;background:#fff;"></div>
<div class="a" style="left:607px;top:245px;width:283px;height:9px;background:#d6e2f0;"></div>
<div class="t" style="left:607.5px;top:246.33px;font-size:6.6px;color:#1a1a1a;">GBPUSD, Great Britain Pound vs US Dollar</div>
<svg style="left:891px;top:247px" width="6" height="6" viewBox="0 0 6 6"><path d="M0.5 0.5l5 5M5.5 0.5l-5 5" stroke="#111" stroke-width="1.3"/></svg>
<div class="a" style="left:607px;top:254px;width:291px;height:17px;background:#f0f0f0;"></div>
<div class="a" style="left:607px;top:254px;width:291px;height:1px;background:#d8d8d8;"></div>
<div class="a" style="left:606px;top:255px;width:18px;height:14.5px;background:#cce4f7;"></div>
<svg style="left:610px;top:257px" width="10" height="11" viewBox="0 0 10 11"><rect x="0.5" y="0.5" width="9" height="10" fill="#fff" stroke="#5090d0"/><path d="M2 4l2-2 2 2 2-2M2 8l2-2 2 2 2-2" stroke="#e04040" stroke-width="0.9" fill="none"/><path d="M2 8l2-2 2 2 2-2" stroke="#3060d0" stroke-width="0.9" fill="none"/></svg>
<svg style="left:628px;top:256px" width="12" height="12" viewBox="0 0 12 12"><rect x="0.5" y="0.5" width="9" height="9" fill="#fff" stroke="#909090"/><path d="M0.5 3.5h9M0.5 6.5h9M3.5 0.5v9M6.5 0.5v9" stroke="#a0a0a0"/><circle cx="8.5" cy="8.5" r="3" fill="#fff" stroke="#707070"/></svg>
<div class="a" style="left:644px;top:256px;width:1px;height:13px;background:#a8a8a8;"></div>
<svg style="left:650px;top:257px" width="12" height="11" viewBox="0 0 12 11"><rect x="0.5" y="0.5" width="9" height="7" fill="#e8f4ff" stroke="#3a86d6"/><path d="M2 5l2-2 2 2 2-2" stroke="#3aa03a" fill="none"/><path d="M7 7a2.5 2.5 0 1 0 4 2" stroke="#d03020" stroke-width="1.8" fill="none"/></svg>
<svg style="left:668px;top:257px" width="6" height="11" viewBox="0 0 6 11"><rect x="0.5" y="1.5" width="5" height="8" rx="1" fill="none" stroke="#b0b0b0"/><path d="M0.5 4.5h5M0.5 6.5h5" stroke="#b0b0b0"/></svg>
<svg style="left:685px;top:257px" width="11" height="11" viewBox="0 0 11 11"><path d="M5.5 0.5h5v10h-5M0.5 3l2-2 2 2M2.5 1v5M0.5 8l2 2 2-2" stroke="#a0a0a0" fill="none"/></svg>
<div class="a" style="left:702px;top:256px;width:1px;height:13px;background:#a8a8a8;"></div>
<div class="a" style="left:705px;top:255px;width:17px;height:15px;background:#cce4f7;"></div>
<svg style="left:708px;top:257px" width="12" height="11" viewBox="0 0 12 11"><path d="M0 5h3l1.5-3 2 6 1.5-3h4" stroke="#e04040" fill="none"/><path d="M0 9h3l2-2 2 3 2-2h3" stroke="#3060d0" fill="none"/></svg>
<div class="a" style="left:723px;top:255px;width:17px;height:15px;background:#cce4f7;"></div>
<svg style="left:726px;top:257px" width="12" height="11" viewBox="0 0 12 11"><circle cx="4" cy="3.5" r="3" fill="#d0d0d0" stroke="#a0a0a0"/><circle cx="5" cy="8" r="3" fill="#c8c8c8" stroke="#a0a0a0"/><circle cx="9" cy="8" r="3" fill="#c8c8c8" stroke="#a0a0a0"/></svg>
<svg style="left:745px;top:257px" width="11" height="11" viewBox="0 0 11 11"><circle cx="4.5" cy="4.5" r="3.8" fill="#fff" stroke="#2a70c0" stroke-width="1.2"/><circle cx="4.5" cy="4.5" r="1.8" fill="#2a70c0"/><path d="M7.5 7.5l3 3" stroke="#c89020" stroke-width="1.6"/></svg>
<svg style="left:763px;top:257px" width="11" height="11" viewBox="0 0 11 11"><circle cx="4.5" cy="4.5" r="3.8" fill="#fff" stroke="#2a70c0" stroke-width="1.2"/><path d="M2.5 4.5h4" stroke="#2a70c0" stroke-width="1.3"/><path d="M7.5 7.5l3 3" stroke="#c89020" stroke-width="1.6"/></svg>
<div class="a" style="left:607px;top:271px;width:291px;height:1px;background:#d8d8d8;"></div>
<svg style="left:607px;top:272px" width="145" height="117"><path d="M20.3 12.5V93.30000000000001" stroke="#d8d8d8" stroke-width="0.8" stroke-dasharray="2 2"/><path d="M41.1 12.5V93.30000000000001" stroke="#d8d8d8" stroke-width="0.8" stroke-dasharray="2 2"/><path d="M61.9 12.5V93.30000000000001" stroke="#d8d8d8" stroke-width="0.8" stroke-dasharray="2 2"/><path d="M82.7 12.5V93.30000000000001" stroke="#d8d8d8" stroke-width="0.8" stroke-dasharray="2 2"/><path d="M103.5 12.5V93.30000000000001" stroke="#d8d8d8" stroke-width="0.8" stroke-dasharray="2 2"/><path d="M124.3 12.5V93.30000000000001" stroke="#d8d8d8" stroke-width="0.8" stroke-dasharray="2 2"/><path d="M0 15.5H145" stroke="#d8d8d8" stroke-width="0.8" stroke-dasharray="2 2"/><path d="M0 28.3H145" stroke="#d8d8d8" stroke-width="0.8" stroke-dasharray="2 2"/><path d="M0 41.1H145" stroke="#d8d8d8" stroke-width="0.8" stroke-dasharray="2 2"/><path d="M0 53.9H145" stroke="#d8d8d8" stroke-width="0.8" stroke-dasharray="2 2"/><path d="M0 66.7H145" stroke="#d8d8d8" stroke-width="0.8" stroke-dasharray="2 2"/><path d="M0 79.5H145" stroke="#d8d8d8" stroke-width="0.8" stroke-dasharray="2 2"/><path d="M0 92.3H145" stroke="#d8d8d8" stroke-width="0.8" stroke-dasharray="2 2"/><polyline points="0.2,36.1 2.9,47.7 5.5,36.1 8.2,47.7 10.9,36.1 13.6,47.7 18.1,22.7 20.8,35.2 23.5,22.7 26.2,35.2 28.8,22.7 31.5,35.2 34.2,22.7 36.9,35.2 39.6,22.7 42.3,35.2 45.0,47.7 49.5,22.7 54.8,47.7 60.2,22.7 62.9,35.2 65.6,22.7 68.3,35.2 71.0,22.7 74.5,35.2 77.2,47.7 79.9,35.2 82.6,47.7 87.1,54.9 90.0,49.5 92.5,55.0 95.0,49.5 97.5,55.0 100.0,49.5 102.5,55.0 105.0,49.5 107.5,55.0 110.0,49.5 112.5,55.0 115.0,49.5 117.5,55.0 120.0,49.5 122.0,48.0 144.0,48.0" stroke="#e85050" stroke-width="1.3" fill="none"/><polyline points="0.2,54.9 2.9,60.3 5.5,54.9 8.2,60.3 10.9,54.9 13.6,60.3 16.3,54.9 41.4,54.9 44.1,60.3 46.8,54.9 52.1,54.9 54.8,60.3 57.5,54.9 73.6,54.9 76.3,60.3 79.0,54.9 81.7,60.3 84.4,54.9 85.0,73.0 87.5,62.0 90.0,73.0 92.5,62.0 95.0,73.0 97.5,62.0 100.0,73.0 102.5,62.0 105.0,73.0 107.5,62.0 110.0,73.0 112.5,62.0 115.0,73.0 117.5,62.0 120.0,73.0 122.0,60.7 144.0,60.7" stroke="#1a5ad8" stroke-width="1.6" fill="none"/></svg>
<div class="a" style="left:607px;top:389px;width:145px;height:1px;background:#d0d0d0;"></div>
<div class="a" style="left:752px;top:272px;width:1px;height:161px;background:#707070;"></div>
<div class="a" style="left:752px;top:271.5px;width:1px;height:0px;background:#000;"></div>
<div class="a" style="left:753px;top:271.5px;width:145px;height:16.5px;background:#fff;"></div>
<div class="a" style="left:826px;top:271.5px;width:1px;height:16.5px;background:#ececec;"></div>
<div class="t" style="left:689px;width:200px;text-align:center;top:277.04px;font-size:7.2px;color:#222;">Цена</div>
<div class="t" style="left:761.5px;width:200px;text-align:center;top:276.95px;font-size:7.4px;color:#222;">Торговля</div>
<div class="a" style="left:753px;top:288.00px;width:73px;height:12.85px;background:#fbe2fb;border-bottom:1px solid #f2d4f2"></div>
<div class="a" style="left:826px;top:288.00px;width:72px;height:12.85px;background:#fff;border-bottom:1px solid #ececec"></div>
<div class="t" style="left:689px;width:200px;text-align:center;top:290.54px;font-size:7.2px;color:#2a2a2a;letter-spacing:0.2px;">1.3023</div>
<div class="a" style="left:827px;top:289.20px;width:10px;height:10px;background:#fff;border:1px solid #e0e0e0"></div>
<div class="a" style="left:886px;top:289.20px;width:10px;height:10px;background:#fff;border:1px solid #e0e0e0"></div>
<svg style="left:828.5px;top:292px" width="7" height="5" viewBox="0 0 7 5"><path d="M1 1.5l2.5 2 2.5-2" stroke="#e02020" stroke-width="1.2" fill="none"/></svg>
<svg style="left:887.5px;top:292px" width="7" height="5" viewBox="0 0 7 5"><path d="M1 3.5l2.5-2 2.5 2" stroke="#a0a0a0" stroke-width="1.2" fill="none"/></svg>
<div class="a" style="left:753px;top:300.85px;width:73px;height:12.85px;background:#fbe2fb;border-bottom:1px solid #f2d4f2"></div>
<div class="a" style="left:826px;top:300.85px;width:72px;height:12.85px;background:#fff;border-bottom:1px solid #ececec"></div>
<div class="t" style="left:689px;width:200px;text-align:center;top:303.39px;font-size:7.2px;color:#2a2a2a;letter-spacing:0.2px;">1.3022</div>
<div class="a" style="left:827px;top:302.05px;width:10px;height:10px;background:#fff;border:1px solid #e0e0e0"></div>
<div class="a" style="left:886px;top:302.05px;width:10px;height:10px;background:#fff;border:1px solid #e0e0e0"></div>
<svg style="left:828.5px;top:305px" width="7" height="5" viewBox="0 0 7 5"><path d="M1 1.5l2.5 2 2.5-2" stroke="#e02020" stroke-width="1.2" fill="none"/></svg>
<svg style="left:887.5px;top:305px" width="7" height="5" viewBox="0 0 7 5"><path d="M1 3.5l2.5-2 2.5 2" stroke="#a0a0a0" stroke-width="1.2" fill="none"/></svg>
<div class="a" style="left:753px;top:313.70px;width:73px;height:12.85px;background:#fbe2fb;border-bottom:1px solid #f2d4f2"></div>
<div class="a" style="left:826px;top:313.70px;width:72px;height:12.85px;background:#fff;border-bottom:1px solid #ececec"></div>
<div class="t" style="left:689px;width:200px;text-align:center;top:316.24px;font-size:7.2px;color:#2a2a2a;letter-spacing:0.2px;">1.3021</div>
<div class="a" style="left:827px;top:314.90px;width:10px;height:10px;background:#fff;border:1px solid #e0e0e0"></div>
<div class="a" style="left:886px;top:314.90px;width:10px;height:10px;background:#fff;border:1px solid #e0e0e0"></div>
<svg style="left:828.5px;top:318px" width="7" height="5" viewBox="0 0 7 5"><path d="M1 1.5l2.5 2 2.5-2" stroke="#e02020" stroke-width="1.2" fill="none"/></svg>
<svg style="left:887.5px;top:318px" width="7" height="5" viewBox="0 0 7 5"><path d="M1 3.5l2.5-2 2.5 2" stroke="#a0a0a0" stroke-width="1.2" fill="none"/></svg>
<div class="a" style="left:753px;top:326.55px;width:73px;height:12.85px;background:#d6e4f8;border-bottom:1px solid #c4d4ec"></div>
<div class="a" style="left:826px;top:326.55px;width:72px;height:12.85px;background:#fff;border-bottom:1px solid #ececec"></div>
<div class="t" style="left:689px;width:200px;text-align:center;top:329.09px;font-size:7.2px;color:#2a2a2a;letter-spacing:0.2px;">1.3018</div>
<div class="a" style="left:827px;top:327.75px;width:10px;height:10px;background:#fff;border:1px solid #e0e0e0"></div>
<div class="a" style="left:886px;top:327.75px;width:10px;height:10px;background:#fff;border:1px solid #e0e0e0"></div>
<svg style="left:828.5px;top:331px" width="7" height="5" viewBox="0 0 7 5"><path d="M1 1.5l2.5 2 2.5-2" stroke="#a0a0a0" stroke-width="1.2" fill="none"/></svg>
<svg style="left:887.5px;top:331px" width="7" height="5" viewBox="0 0 7 5"><path d="M1 3.5l2.5-2 2.5 2" stroke="#3040d0" stroke-width="1.2" fill="none"/></svg>
<div class="a" style="left:753px;top:339.40px;width:73px;height:12.85px;background:#d6e4f8;border-bottom:1px solid #c4d4ec"></div>
<div class="a" style="left:826px;top:339.40px;width:72px;height:12.85px;background:#fff;border-bottom:1px solid #ececec"></div>
<div class="t" style="left:689px;width:200px;text-align:center;top:341.94px;font-size:7.2px;color:#2a2a2a;letter-spacing:0.2px;">1.3017</div>
<div class="a" style="left:827px;top:340.60px;width:10px;height:10px;background:#fff;border:1px solid #e0e0e0"></div>
<div class="a" style="left:886px;top:340.60px;width:10px;height:10px;background:#fff;border:1px solid #e0e0e0"></div>
<svg style="left:828.5px;top:343px" width="7" height="5" viewBox="0 0 7 5"><path d="M1 1.5l2.5 2 2.5-2" stroke="#a0a0a0" stroke-width="1.2" fill="none"/></svg>
<svg style="left:887.5px;top:343px" width="7" height="5" viewBox="0 0 7 5"><path d="M1 3.5l2.5-2 2.5 2" stroke="#3040d0" stroke-width="1.2" fill="none"/></svg>
<div class="a" style="left:753px;top:352.25px;width:73px;height:12.85px;background:#d6e4f8;border-bottom:1px solid #c4d4ec"></div>
<div class="a" style="left:826px;top:352.25px;width:72px;height:12.85px;background:#fff;border-bottom:1px solid #ececec"></div>
<div class="t" style="left:689px;width:200px;text-align:center;top:354.79px;font-size:7.2px;color:#2a2a2a;letter-spacing:0.2px;">1.3016</div>
<div class="a" style="left:827px;top:353.45px;width:10px;height:10px;background:#fff;border:1px solid #e0e0e0"></div>
<div class="a" style="left:886px;top:353.45px;width:10px;height:10px;background:#fff;border:1px solid #e0e0e0"></div>
<svg style="left:828.5px;top:356px" width="7" height="5" viewBox="0 0 7 5"><path d="M1 1.5l2.5 2 2.5-2" stroke="#a0a0a0" stroke-width="1.2" fill="none"/></svg>
<svg style="left:887.5px;top:356px" width="7" height="5" viewBox="0 0 7 5"><path d="M1 3.5l2.5-2 2.5 2" stroke="#3040d0" stroke-width="1.2" fill="none"/></svg>
<div class="a" style="left:753px;top:326px;width:145px;height:1.5px;background:#404040;"></div>
<div class="a" style="left:753px;top:389px;width:145px;height:14px;background:#ececec;"></div>
<div class="a" style="left:753px;top:390px;width:11px;height:12px;background:#e6e6e6"></div>
<svg style="left:756px;top:394px" width="6" height="5" viewBox="0 0 6 5"><path d="M1 1.5h4L3 4z" fill="#111"/></svg>
<div class="a" style="left:765px;top:389.5px;width:23px;height:13px;background:#fff;border:1px solid #adadad"></div>
<div class="t" style="left:768px;top:392.50px;font-size:7.3px;color:#a0a0a0;">sl</div>
<div class="t" style="right:115px;top:392.45px;font-size:7.4px;color:#1a1a1a;">0</div>
<div class="a" style="left:789px;top:390px;width:11px;height:12px;background:#e6e6e6"></div>
<svg style="left:792px;top:394px" width="6" height="5" viewBox="0 0 6 5"><path d="M1 3.5h4L3 1z" fill="#111"/></svg>
<div class="a" style="left:802px;top:390px;width:11px;height:12px;background:#e6e6e6"></div>
<svg style="left:805px;top:394px" width="6" height="5" viewBox="0 0 6 5"><path d="M1 1.5h4L3 4z" fill="#111"/></svg>
<div class="a" style="left:813px;top:389.5px;width:24px;height:13px;background:#fff;border:1px solid #adadad"></div>
<div class="t" style="right:66px;top:392.45px;font-size:7.4px;color:#1a1a1a;">3.00</div>
<div class="a" style="left:838px;top:390px;width:11px;height:12px;background:#e6e6e6"></div>
<svg style="left:841px;top:394px" width="6" height="5" viewBox="0 0 6 5"><path d="M1 3.5h4L3 1z" fill="#111"/></svg>
<div class="a" style="left:851px;top:390px;width:11px;height:12px;background:#e6e6e6"></div>
<svg style="left:854px;top:394px" width="6" height="5" viewBox="0 0 6 5"><path d="M1 1.5h4L3 4z" fill="#111"/></svg>
<div class="a" style="left:862px;top:389.5px;width:23px;height:13px;background:#fff;border:1px solid #adadad"></div>
<div class="t" style="left:865px;top:392.50px;font-size:7.3px;color:#a0a0a0;">tp</div>
<div class="t" style="right:18px;top:392.45px;font-size:7.4px;color:#1a1a1a;">0</div>
<div class="a" style="left:886px;top:390px;width:11px;height:12px;background:#e6e6e6"></div>
<svg style="left:889px;top:394px" width="6" height="5" viewBox="0 0 6 5"><path d="M1 3.5h4L3 1z" fill="#111"/></svg>
<div class="a" style="left:753px;top:403px;width:145px;height:15px;background:#e6e6e6;"></div>
<div class="t" style="left:757px;top:407.21px;font-size:6.85px;color:#1a1a1a;">#11392292 buy 3.00 GBPUSD  1.3018</div>
<svg style="left:889px;top:408px" width="7" height="5" viewBox="0 0 7 5"><path d="M1 1.5l2.5 2 2.5-2" stroke="#606060" stroke-width="1.2" fill="none"/></svg>
<div class="a" style="left:753px;top:418px;width:47px;height:13px;background:linear-gradient(#f09a9a,#dc6666);border:1px solid #c05050"></div>
<div class="t" style="left:676.5px;width:200px;text-align:center;top:421.15px;font-size:7.4px;color:#3a1010;">Sell</div>
<div class="a" style="left:801px;top:418px;width:49px;height:13px;background:linear-gradient(#eeeeb0,#dcdc8c);border:1px solid #c8c870"></div>
<div class="t" style="left:725.5px;width:200px;text-align:center;top:421.15px;font-size:7.4px;color:#303010;">Закрыть</div>
<div class="a" style="left:850px;top:418px;width:48px;height:13px;background:linear-gradient(#a8c0ea,#7090d0);border:1px solid #6080c0"></div>
<div class="t" style="left:774px;width:200px;text-align:center;top:421.15px;font-size:7.4px;color:#102040;">Buy</div>
<div class="a" style="left:0px;top:433px;width:900px;height:1px;background:#a0a0a0;"></div>
<div class="a" style="left:1px;top:434px;width:898px;height:107px;background:#f0f0f0;"></div>
<svg style="left:2.5px;top:437.5px" width="5" height="5" viewBox="0 0 5 5"><path d="M0.5 0.5l4 4M4.5 0.5l-4 4" stroke="#111" stroke-width="1.2"/></svg>
<div class="a" style="left:2px;top:445px;width:8px;height:96px;background:#c0d0e4;"></div>
<div class="t" style="left:-40px;top:514px;width:93px;text-align:center;font-size:6.8px;color:#202020;transform:rotate(-90deg)">Инструменты</div>
<div class="a" style="left:11px;top:436px;width:875px;height:89px;background:#fff;"></div>
<div class="a" style="left:11px;top:436px;width:875px;height:1px;background:#e0e0e0;"></div>
<div class="a" style="left:62px;top:437px;width:1px;height:15px;background:#ececec;"></div>
<div class="a" style="left:101px;top:437px;width:1px;height:15px;background:#ececec;"></div>
<div class="a" style="left:527px;top:437px;width:1px;height:15px;background:#ececec;"></div>
<div class="a" style="left:569px;top:437px;width:1px;height:15px;background:#ececec;"></div>
<div class="a" style="left:624px;top:437px;width:1px;height:15px;background:#ececec;"></div>
<div class="a" style="left:711px;top:437px;width:1px;height:15px;background:#ececec;"></div>
<div class="a" style="left:798px;top:437px;width:1px;height:15px;background:#ececec;"></div>
<div class="t" style="left:15px;top:441.45px;font-size:7.4px;color:#333;">Время</div>
<div class="t" style="left:66px;top:441.45px;font-size:7.4px;color:#333;">Валюта</div>
<div class="t" style="left:105px;top:441.45px;font-size:7.4px;color:#333;">Событие</div>
<div class="t" style="left:530px;top:441.45px;font-size:7.4px;color:#333;">Приори...</div>
<div class="t" style="right:279px;top:441.45px;font-size:7.4px;color:#333;">Период</div>
<div class="t" style="right:192px;top:441.45px;font-size:7.4px;color:#333;">Текущий</div>
<div class="t" style="right:104.5px;top:441.45px;font-size:7.4px;color:#333;">Прогноз</div>
<div class="t" style="right:18px;top:441.45px;font-size:7.4px;color:#333;">Предыдущий</div>
<div class="t" style="left:13.3px;top:456.10px;font-size:7.5px;color:#111;font-weight:bold;">Понедельник, 3 Февраль</div>
<div class="a" style="left:11px;top:436px;width:875px;height:89px;overflow:hidden">
<div class="a" style="left:0;top:29.1px;width:875px;height:13px;background:#e6f6fb;border-bottom:1px solid #e4eef2"></div>
<div class="a" style="left:51px;top:29.1px;width:1px;height:13px;background:#dfe8ec"></div>
<div class="a" style="left:90px;top:29.1px;width:1px;height:13px;background:#dfe8ec"></div>
<div class="a" style="left:516px;top:29.1px;width:1px;height:13px;background:#dfe8ec"></div>
<div class="a" style="left:558px;top:29.1px;width:1px;height:13px;background:#dfe8ec"></div>
<div class="a" style="left:613px;top:29.1px;width:1px;height:13px;background:#dfe8ec"></div>
<div class="a" style="left:700px;top:29.1px;width:1px;height:13px;background:#dfe8ec"></div>
<div class="a" style="left:787px;top:29.1px;width:1px;height:13px;background:#dfe8ec"></div>
<svg style="left:1px;top:32px" width="11" height="8" viewBox="0 0 11 8"><rect width="11" height="8" fill="#2a3a9a"/><rect x="0" y="0" width="5" height="4" fill="#c83040"/><path d="M0 2h5M2.5 0v4" stroke="#fff" stroke-width="0.8"/><circle cx="8" cy="5" r="0.8" fill="#fff"/><circle cx="3" cy="6" r="0.8" fill="#fff"/></svg>
<div class="t" style="left:14px;top:32.34px;font-size:7.0px;color:#222;">00:00</div>
<div class="t" style="left:54px;top:32.34px;font-size:7.0px;color:#222;">AUD</div>
<div class="t" style="left:92.3px;top:31.98px;font-size:7.75px;color:#1a1a1a;">Индекс менеджеров по закупкам в производственном секторе от Commonwealth Bank</div>
<svg style="left:532px;top:33px" width="9" height="6" viewBox="0 0 9 6"><path d="M0.8 2.2a5 5 0 0 1 7.4 0" stroke="#2070e0" stroke-width="1.3" fill="none"/><path d="M2.5 3.8a2.6 2.6 0 0 1 4 0" stroke="#2070e0" stroke-width="1.2" fill="none"/><circle cx="4.5" cy="5.3" r="0.9" fill="#2070e0"/></svg>
<div class="t" style="right:265px;top:32.15px;font-size:7.4px;color:#222;">янв</div>
<div class="t" style="right:178px;top:32.15px;font-size:7.4px;color:#222;">49.6</div>
<div class="t" style="right:90.5px;top:32.15px;font-size:7.4px;color:#222;">49.1</div>
<div class="t" style="right:4px;top:32.15px;font-size:7.4px;color:#222;">49.1</div>
<div class="a" style="left:0;top:42.2px;width:875px;height:13px;background:#e6f6fb;border-bottom:1px solid #e4eef2"></div>
<div class="a" style="left:51px;top:42.2px;width:1px;height:13px;background:#dfe8ec"></div>
<div class="a" style="left:90px;top:42.2px;width:1px;height:13px;background:#dfe8ec"></div>
<div class="a" style="left:516px;top:42.2px;width:1px;height:13px;background:#dfe8ec"></div>
<div class="a" style="left:558px;top:42.2px;width:1px;height:13px;background:#dfe8ec"></div>
<div class="a" style="left:613px;top:42.2px;width:1px;height:13px;background:#dfe8ec"></div>
<div class="a" style="left:700px;top:42.2px;width:1px;height:13px;background:#dfe8ec"></div>
<div class="a" style="left:787px;top:42.2px;width:1px;height:13px;background:#dfe8ec"></div>
<svg style="left:1px;top:45px" width="11" height="8" viewBox="0 0 11 8"><rect width="11" height="8" fill="#2a3a9a"/><rect x="0" y="0" width="5" height="4" fill="#c83040"/><path d="M0 2h5M2.5 0v4" stroke="#fff" stroke-width="0.8"/><circle cx="8" cy="5" r="0.8" fill="#fff"/><circle cx="3" cy="6" r="0.8" fill="#fff"/></svg>
<div class="t" style="left:14px;top:45.44px;font-size:7.0px;color:#222;">02:30</div>
<div class="t" style="left:54px;top:45.44px;font-size:7.0px;color:#222;">AUD</div>
<div class="t" style="left:92.3px;top:45.08px;font-size:7.75px;color:#1a1a1a;">Разрешения на строительство м/м</div>
<svg style="left:532px;top:46px" width="9" height="6" viewBox="0 0 9 6"><path d="M0.8 2.2a5 5 0 0 1 7.4 0" stroke="#2070e0" stroke-width="1.3" fill="none"/><path d="M2.5 3.8a2.6 2.6 0 0 1 4 0" stroke="#2070e0" stroke-width="1.2" fill="none"/><circle cx="4.5" cy="5.3" r="0.9" fill="#2070e0"/></svg>
<div class="t" style="right:265px;top:45.25px;font-size:7.4px;color:#222;">дек</div>
<div class="t" style="right:178px;top:45.25px;font-size:7.4px;color:#222;">-0.2%</div>
<div class="t" style="right:90.5px;top:45.25px;font-size:7.4px;color:#222;">-4.9%</div>
<div class="t" style="right:4px;top:45.25px;font-size:7.4px;color:#222;">10.9%</div>
<div class="a" style="left:845px;top:53.3px;width:26px;height:1px;background:#7090b0"></div>
<div class="a" style="left:0;top:55.2px;width:875px;height:13px;background:#ffffff;border-bottom:1px solid #e4eef2"></div>
<div class="a" style="left:51px;top:55.2px;width:1px;height:13px;background:#dfe8ec"></div>
<div class="a" style="left:90px;top:55.2px;width:1px;height:13px;background:#dfe8ec"></div>
<div class="a" style="left:516px;top:55.2px;width:1px;height:13px;background:#dfe8ec"></div>
<div class="a" style="left:558px;top:55.2px;width:1px;height:13px;background:#dfe8ec"></div>
<div class="a" style="left:613px;top:55.2px;width:1px;height:13px;background:#dfe8ec"></div>
<div class="a" style="left:700px;top:55.2px;width:1px;height:13px;background:#dfe8ec"></div>
<div class="a" style="left:787px;top:55.2px;width:1px;height:13px;background:#dfe8ec"></div>
<svg style="left:1px;top:58px" width="11" height="8" viewBox="0 0 11 8"><rect width="11" height="8" fill="#2a3a9a"/><rect x="0" y="0" width="5" height="4" fill="#c83040"/><path d="M0 2h5M2.5 0v4" stroke="#fff" stroke-width="0.8"/><circle cx="8" cy="5" r="0.8" fill="#fff"/><circle cx="3" cy="6" r="0.8" fill="#fff"/></svg>
<div class="t" style="left:14px;top:58.44px;font-size:7.0px;color:#222;">02:30</div>
<div class="t" style="left:54px;top:58.44px;font-size:7.0px;color:#222;">AUD</div>
<div class="t" style="left:92.3px;top:58.08px;font-size:7.75px;color:#1a1a1a;">Разрешения на строительство частных домов м/м</div>
<div class="a" style="left:536px;top:61.3px;width:2px;height:2px;background:#2070e0"></div>
<div class="t" style="right:265px;top:58.25px;font-size:7.4px;color:#222;">дек</div>
<div class="t" style="right:178px;top:58.25px;font-size:7.4px;color:#222;">-0.1%</div>
<div class="t" style="right:4px;top:58.25px;font-size:7.4px;color:#222;">6.0%</div>
<div class="a" style="left:845px;top:66.3px;width:26px;height:1px;background:#7090b0"></div>
<div class="a" style="left:0;top:68.0px;width:875px;height:13px;background:#e6f6fb;border-bottom:1px solid #e4eef2"></div>
<div class="a" style="left:51px;top:68.0px;width:1px;height:13px;background:#dfe8ec"></div>
<div class="a" style="left:90px;top:68.0px;width:1px;height:13px;background:#dfe8ec"></div>
<div class="a" style="left:516px;top:68.0px;width:1px;height:13px;background:#dfe8ec"></div>
<div class="a" style="left:558px;top:68.0px;width:1px;height:13px;background:#dfe8ec"></div>
<div class="a" style="left:613px;top:68.0px;width:1px;height:13px;background:#dfe8ec"></div>
<div class="a" style="left:700px;top:68.0px;width:1px;height:13px;background:#dfe8ec"></div>
<div class="a" style="left:787px;top:68.0px;width:1px;height:13px;background:#dfe8ec"></div>
<svg style="left:1px;top:71px" width="11" height="8" viewBox="0 0 11 8"><rect width="11" height="8" fill="#2a3a9a"/><rect x="0" y="0" width="5" height="4" fill="#c83040"/><path d="M0 2h5M2.5 0v4" stroke="#fff" stroke-width="0.8"/><circle cx="8" cy="5" r="0.8" fill="#fff"/><circle cx="3" cy="6" r="0.8" fill="#fff"/></svg>
<div class="t" style="left:14px;top:71.24px;font-size:7.0px;color:#222;">02:30</div>
<div class="t" style="left:54px;top:71.24px;font-size:7.0px;color:#222;">AUD</div>
<div class="t" style="left:92.3px;top:70.88px;font-size:7.75px;color:#1a1a1a;">Количество объявлений о вакансиях от ANZ м/м</div>
<div class="a" style="left:536px;top:74.1px;width:2px;height:2px;background:#2070e0"></div>
<div class="t" style="right:265px;top:71.05px;font-size:7.4px;color:#222;">янв</div>
<div class="t" style="right:178px;top:71.05px;font-size:7.4px;color:#222;">3.8%</div>
<div class="t" style="right:90.5px;top:71.05px;font-size:7.4px;color:#222;">3.7%</div>
<div class="t" style="right:4px;top:71.05px;font-size:7.4px;color:#222;">-5.7%</div>
<div class="a" style="left:845px;top:79.1px;width:26px;height:1px;background:#7090b0"></div>
<div class="a" style="left:0;top:80.8px;width:875px;height:13px;background:#fde2e4;border-bottom:1px solid #e4eef2"></div>
<div class="a" style="left:51px;top:80.8px;width:1px;height:13px;background:#dfe8ec"></div>
<div class="a" style="left:90px;top:80.8px;width:1px;height:13px;background:#dfe8ec"></div>
<div class="a" style="left:516px;top:80.8px;width:1px;height:13px;background:#dfe8ec"></div>
<div class="a" style="left:558px;top:80.8px;width:1px;height:13px;background:#dfe8ec"></div>
<div class="a" style="left:613px;top:80.8px;width:1px;height:13px;background:#dfe8ec"></div>
<div class="a" style="left:700px;top:80.8px;width:1px;height:13px;background:#dfe8ec"></div>
<div class="a" style="left:787px;top:80.8px;width:1px;height:13px;background:#dfe8ec"></div>
<div class="a" style="left:6px;top:85.4px;width:4px;height:4px;border-radius:2px;background:#e02020"></div>
<div class="t" style="left:14px;top:84.04px;font-size:7.0px;color:#222;">02:30</div>
<div class="t" style="left:54px;top:84.04px;font-size:7.0px;color:#222;">JPY</div>
<div class="t" style="left:92.3px;top:83.68px;font-size:7.75px;color:#1a1a1a;">Индекс менеджеров по закупкам в производственном секторе от Markit</div>
<svg style="left:532px;top:84px" width="9" height="6" viewBox="0 0 9 6"><path d="M0.8 2.2a5 5 0 0 1 7.4 0" stroke="#2070e0" stroke-width="1.3" fill="none"/><path d="M2.5 3.8a2.6 2.6 0 0 1 4 0" stroke="#2070e0" stroke-width="1.2" fill="none"/><circle cx="4.5" cy="5.3" r="0.9" fill="#2070e0"/></svg>
<div class="t" style="right:265px;top:83.85px;font-size:7.4px;color:#222;">янв</div>
<div class="t" style="right:178px;top:83.85px;font-size:7.4px;color:#222;">48.8</div>
<div class="t" style="right:90.5px;top:83.85px;font-size:7.4px;color:#222;">49.3</div>
<div class="t" style="right:4px;top:83.85px;font-size:7.4px;color:#222;">49.3</div>
</div>
<div class="a" style="left:886px;top:436px;width:12px;height:89px;background:#f0f0f0;"></div>
<div class="a" style="left:887px;top:448px;width:10px;height:10px;background:#cdcdcd;"></div>
<svg style="left:888px;top:441px" width="8" height="4" viewBox="0 0 8 4"><path d="M0.5 3.5L4 0.5 7.5 3.5" stroke="#404040" fill="none"/></svg>
<svg style="left:888px;top:518px" width="8" height="4" viewBox="0 0 8 4"><path d="M0.5 0.5L4 3.5 7.5 0.5" stroke="#404040" fill="none"/></svg>
<div class="a" style="left:11px;top:525px;width:888px;height:1.5px;background:#505050;"></div>
<div class="a" style="left:11px;top:526px;width:888px;height:13px;background:#f0f0f0;"></div>
<div class="a" style="left:223px;top:525px;width:50px;height:13.5px;background:#fff;border:1px solid #404040;border-top:none;border-left-width:1.5px;border-bottom-width:1.5px"></div>
<div class="t" style="left:19px;top:528.86px;font-size:7.8px;color:#909090;">Торговля</div>
<div class="t" style="left:65px;top:528.90px;font-size:7.7px;color:#909090;">Активы</div>
<div class="t" style="left:104.4px;top:528.95px;font-size:7.6px;color:#909090;">История</div>
<div class="t" style="left:147.5px;top:528.95px;font-size:7.6px;color:#909090;">Новости</div>
<div class="t" style="left:190px;top:528.81px;font-size:7.9px;color:#909090;">Почта</div>
<div class="t" style="left:230px;top:529.07px;font-size:7.35px;color:#1a1a1a;">Календарь</div>
<div class="t" style="left:280px;top:528.86px;font-size:7.8px;color:#909090;">Компания</div>
<div class="t" style="left:329px;top:528.90px;font-size:7.7px;color:#909090;">Маркет</div>
<div class="t" style="left:376px;top:528.81px;font-size:7.9px;color:#909090;">Алерты</div>
<div class="t" style="left:417px;top:528.95px;font-size:7.6px;color:#909090;">Сигналы</div>
<div class="t" style="left:460px;top:528.95px;font-size:7.6px;color:#909090;">Статьи</div>
<div class="t" style="left:508px;top:528.95px;font-size:7.6px;color:#909090;">Библиотека</div>
<div class="t" style="left:577px;top:529.24px;font-size:7.0px;color:#909090;">VPS</div>
<div class="t" style="left:603px;top:528.95px;font-size:7.6px;color:#909090;">Эксперты</div>
<div class="t" style="left:650px;top:528.81px;font-size:7.9px;color:#909090;">Журнал</div>
<div class="a" style="left:58px;top:528px;width:1px;height:9px;background:#a0a0a0;"></div>
<div class="a" style="left:98px;top:528px;width:1px;height:9px;background:#a0a0a0;"></div>
<div class="a" style="left:141px;top:528px;width:1px;height:9px;background:#a0a0a0;"></div>
<div class="a" style="left:184px;top:528px;width:1px;height:9px;background:#a0a0a0;"></div>
<div class="a" style="left:323px;top:528px;width:1px;height:9px;background:#a0a0a0;"></div>
<div class="a" style="left:370px;top:528px;width:1px;height:9px;background:#a0a0a0;"></div>
<div class="a" style="left:410px;top:528px;width:1px;height:9px;background:#a0a0a0;"></div>
<div class="a" style="left:454px;top:528px;width:1px;height:9px;background:#a0a0a0;"></div>
<div class="a" style="left:502px;top:528px;width:1px;height:9px;background:#a0a0a0;"></div>
<div class="a" style="left:571px;top:528px;width:1px;height:9px;background:#a0a0a0;"></div>
<div class="a" style="left:597px;top:528px;width:1px;height:9px;background:#a0a0a0;"></div>
<div class="a" style="left:644px;top:528px;width:1px;height:9px;background:#a0a0a0;"></div>
<div class="t" style="left:213.5px;top:531.86px;font-size:5.5px;color:#e03030;font-weight:bold;">7</div>
<div class="t" style="left:356.5px;top:531.86px;font-size:5.5px;color:#e03030;font-weight:bold;">26</div>
<div class="t" style="left:486px;top:531.86px;font-size:5.5px;color:#e03030;font-weight:bold;">678</div>
<div class="t" style="left:551px;top:531.86px;font-size:5.5px;color:#e03030;font-weight:bold;">7202</div>
<div class="t" style="right:13px;top:529.00px;font-size:7.5px;color:#1a1a1a;">Тестер стратегий</div>
<div class="a" style="left:1px;top:541px;width:898px;height:1px;background:#d8d8d8;"></div>
<div class="a" style="left:1px;top:542px;width:898px;height:15px;background:#f0f0f0;"></div>
<div class="t" style="left:2px;top:547.15px;font-size:7.6px;color:#1a1a1a;">Для вызова справки нажмите F1</div>
<div class="a" style="left:452px;top:543px;width:1px;height:13px;background:#d0d0d0;"></div>
<div class="a" style="left:535px;top:543px;width:1px;height:13px;background:#d0d0d0;"></div>
<div class="a" style="left:643px;top:543px;width:1px;height:13px;background:#d0d0d0;"></div>
<div class="a" style="left:689px;top:543px;width:1px;height:13px;background:#d0d0d0;"></div>
<div class="a" style="left:733px;top:543px;width:1px;height:13px;background:#d0d0d0;"></div>
<div class="a" style="left:778px;top:543px;width:1px;height:13px;background:#d0d0d0;"></div>
<div class="a" style="left:822px;top:543px;width:1px;height:13px;background:#d0d0d0;"></div>
<div class="t" style="left:456.7px;top:546.90px;font-size:7.5px;color:#1a1a1a;">Default</div>
<svg style="left:825px;top:545px" width="11" height="9" viewBox="0 0 11 9"><path d="M0 9h2V7H0zM3 9h2V5H3zM6 9h2V3H6zM9 9h2V0H9z" fill="#1ea01e"/><path d="M0 9L11 0V9z" fill="#1ea01e"/></svg>
<div class="t" style="left:838px;top:546.90px;font-size:7.5px;color:#1a1a1a;">48.70 ms</div>
<div class="a" style="left:894px;top:551px;width:1px;height:1px;background:#a0a0a0;"></div>
<div class="a" style="left:894px;top:553px;width:1px;height:1px;background:#a0a0a0;"></div>
<div class="a" style="left:892px;top:553px;width:1px;height:1px;background:#a0a0a0;"></div>
<div class="a" style="left:894px;top:555px;width:1px;height:1px;background:#a0a0a0;"></div>
<div class="a" style="left:892px;top:555px;width:1px;height:1px;background:#a0a0a0;"></div>
<div class="a" style="left:890px;top:555px;width:1px;height:1px;background:#a0a0a0;"></div>
<div class="a" style="left:0px;top:0px;width:1px;height:558px;background:#3c3c3c;"></div>
<div class="a" style="left:899px;top:0px;width:1px;height:558px;background:#3c3c3c;"></div>
<div class="a" style="left:0px;top:0px;width:900px;height:1px;background:#3c3c3c;"></div>
<div class="a" style="left:0px;top:557px;width:900px;height:1px;background:#3c3c3c;"></div>
<div class="a" style="left:0px;top:53px;width:900px;height:1px;background:#a8a8a8;"></div>
<div class="a" style="left:3px;top:55px;width:136px;height:196px;background:#fff;"></div>
<div class="a" style="left:2px;top:54px;width:1px;height:197px;background:#d8d8d8;"></div>
<div class="a" style="left:3px;top:55px;width:127px;height:9px;background:#d6e2f0;"></div>
<div class="t" style="left:4px;top:56.00px;font-size:7.3px;color:#1a1a1a;">Обзор рынка: 08:24:50</div>
<svg style="left:133px;top:57px" width="5" height="5" viewBox="0 0 5 5"><path d="M0.5 0.5l4 4M4.5 0.5l-4 4" stroke="#111" stroke-width="1.2"/></svg>
<div class="a" style="left:70px;top:64px;width:1px;height:16px;background:#e8e8e8;"></div>
<div class="a" style="left:104px;top:64px;width:1px;height:16px;background:#e8e8e8;"></div>
<div class="t" style="left:7px;top:68.85px;font-size:7.6px;color:#222;">Символ</div>
<div class="t" style="right:798px;top:68.85px;font-size:7.6px;color:#222;">Bid</div>
<div class="t" style="right:764px;top:68.85px;font-size:7.6px;color:#222;">Ask</div>
<div class="a" style="left:3px;top:79.80px;width:135px;height:12.9px;background:#dcf3dc;border-bottom:1px solid #cfdccf"></div>
<div class="a" style="left:70px;top:80px;width:1px;height:13px;background:#c4d0c4;"></div>
<div class="a" style="left:104px;top:80px;width:1px;height:13px;background:#c4d0c4;"></div>
<svg style="left:7px;top:84px" width="6" height="6" viewBox="0 0 6 6"><path d="M3 0L6 2.8 4.6 4.2V6H1.4V4.2L0 2.8z" fill="#22a822"/></svg>
<div class="t" style="left:17px;top:83.54px;font-size:6.8px;color:#2a2a2a;">EURUSD</div>
<div class="t" style="right:798px;top:83.44px;font-size:7.0px;color:#3a40d0;">1.1064</div>
<div class="t" style="right:764px;top:83.44px;font-size:7.0px;color:#3a40d0;">1.1067</div>
<div class="a" style="left:3px;top:92.68px;width:135px;height:12.9px;background:#dcf3dc;border-bottom:1px solid #cfdccf"></div>
<div class="a" style="left:70px;top:93px;width:1px;height:13px;background:#c4d0c4;"></div>
<div class="a" style="left:104px;top:93px;width:1px;height:13px;background:#c4d0c4;"></div>
<svg style="left:7px;top:97px" width="6" height="6" viewBox="0 0 6 6"><path d="M3 0L6 2.8 4.6 4.2V6H1.4V4.2L0 2.8z" fill="#22a822"/></svg>
<div class="t" style="left:17px;top:96.42px;font-size:6.8px;color:#2a2a2a;">GBPUSD</div>
<div class="t" style="right:798px;top:96.32px;font-size:7.0px;color:#3a40d0;">1.3018</div>
<div class="t" style="right:764px;top:96.32px;font-size:7.0px;color:#3a40d0;">1.3021</div>
<div class="a" style="left:3px;top:105.56px;width:135px;height:12.9px;background:#dcf3dc;border-bottom:1px solid #cfdccf"></div>
<div class="a" style="left:70px;top:106px;width:1px;height:13px;background:#c4d0c4;"></div>
<div class="a" style="left:104px;top:106px;width:1px;height:13px;background:#c4d0c4;"></div>
<svg style="left:7px;top:110px" width="6" height="6" viewBox="0 0 6 6"><path d="M3 0L6 2.8 4.6 4.2V6H1.4V4.2L0 2.8z" fill="#22a822"/></svg>
<div class="t" style="left:17px;top:109.30px;font-size:6.8px;color:#2a2a2a;">USDCHF</div>
<div class="t" style="right:798px;top:109.20px;font-size:7.0px;color:#3a40d0;">0.9675</div>
<div class="t" style="right:764px;top:109.20px;font-size:7.0px;color:#3a40d0;">0.9678</div>
<div class="a" style="left:3px;top:118.44px;width:135px;height:12.9px;background:#dcf3dc;border-bottom:1px solid #cfdccf"></div>
<div class="a" style="left:70px;top:118px;width:1px;height:13px;background:#c4d0c4;"></div>
<div class="a" style="left:104px;top:118px;width:1px;height:13px;background:#c4d0c4;"></div>
<svg style="left:7px;top:122px" width="6" height="6" viewBox="0 0 6 6"><path d="M3 0L6 2.8 4.6 4.2V6H1.4V4.2L0 2.8z" fill="#22a822"/></svg>
<div class="t" style="left:17px;top:122.18px;font-size:6.8px;color:#2a2a2a;">USDJPY</div>
<div class="t" style="right:798px;top:122.08px;font-size:7.0px;color:#3a40d0;">108.85</div>
<div class="t" style="right:764px;top:122.08px;font-size:7.0px;color:#3a40d0;">108.88</div>
<div class="a" style="left:3px;top:131.32px;width:135px;height:12.9px;background:#dcf3dc;border-bottom:1px solid #cfdccf"></div>
<div class="a" style="left:70px;top:131px;width:1px;height:13px;background:#c4d0c4;"></div>
<div class="a" style="left:104px;top:131px;width:1px;height:13px;background:#c4d0c4;"></div>
<svg style="left:7px;top:135px" width="6" height="6" viewBox="0 0 6 6"><path d="M3 0L6 2.8 4.6 4.2V6H1.4V4.2L0 2.8z" fill="#22a822"/></svg>
<div class="t" style="left:17px;top:135.06px;font-size:6.8px;color:#2a2a2a;">AUDUSD</div>
<div class="t" style="right:798px;top:134.96px;font-size:7.0px;color:#3a40d0;">0.6721</div>
<div class="t" style="right:764px;top:134.96px;font-size:7.0px;color:#3a40d0;">0.6724</div>
<svg style="left:7px;top:148px" width="6" height="6" viewBox="0 0 6 6"><path d="M2.2 0h1.6v2.2H6v1.6H3.8V6H2.2V3.8H0V2.2h2.2z" fill="#22a022"/></svg>
<div class="t" style="left:17px;top:147.35px;font-size:7.4px;color:#8a8a8a;">добавить...</div>
<div class="t" style="right:764px;top:147.35px;font-size:7.4px;color:#8a8a8a;">5 / 302</div>
<div class="a" style="left:3px;top:251px;width:136px;height:15px;background:#f0f0f0;"></div>
<div class="a" style="left:52px;top:251px;width:87px;height:1px;background:#505050;"></div>
<div class="a" style="left:3px;top:251px;width:2px;height:1px;background:#a0a0a0;"></div>
<div class="a" style="left:5px;top:251px;width:47px;height:14px;background:#fff;border:1px solid #404040;border-top:none;border-left-width:1.5px;border-bottom-width:1.5px"></div>
<div class="t" style="left:11.3px;top:255.26px;font-size:7.8px;color:#1a1a1a;">Символы</div>
<div class="t" style="left:58px;top:255.35px;font-size:7.6px;color:#8c8c8c;">Детали</div>
<div class="a" style="left:91px;top:253px;width:1px;height:10px;background:#a8a8a8;"></div>
<div class="t" style="left:97px;top:255.35px;font-size:7.6px;color:#8c8c8c;">Торговля</div>
<div class="a" style="left:136px;top:253px;width:1px;height:10px;background:#a8a8a8;"></div>
<div class="a" style="left:2px;top:267px;width:137px;height:1px;background:#d0d0d0;"></div>
<div class="a" style="left:3px;top:268px;width:136px;height:150px;background:#fff;"></div>
<div class="a" style="left:3px;top:269px;width:127px;height:10px;background:#d6e2f0;"></div>
<div class="t" style="left:4px;top:270.35px;font-size:7.6px;color:#1a1a1a;">Навигатор</div>
<svg style="left:133px;top:272px" width="5" height="5" viewBox="0 0 5 5"><path d="M0.5 0.5l4 4M4.5 0.5l-4 4" stroke="#111" stroke-width="1.2"/></svg>
<div class="a" style="left:11px;top:289px;width:1px;height:129px;background:#cfcfcf"></div>
<div class="a" style="left:25px;top:313px;width:1px;height:105px;background:#cfcfcf"></div>
<div class="a" style="left:39px;top:313px;width:1px;height:105px;background:#cfcfcf"></div>
<svg style="left:8px;top:282px" width="7" height="7" viewBox="0 0 7 7"><rect x="0.5" y="0.5" width="6" height="6" fill="#fff" stroke="#a0a0a0"/><path d="M1.5 3.5h4" stroke="#404040"/><path d="M3.5 1.5v4" stroke="#404040"/></svg>
<svg style="left:19px;top:280px" width="12" height="11" viewBox="0 0 12 11"><circle cx="4" cy="3.5" r="2.8" fill="#5cc040"/><circle cx="8" cy="3.5" r="2.8" fill="#3aa028"/><ellipse cx="4" cy="8.5" rx="4" ry="2.5" fill="#5cc040"/><ellipse cx="8.5" cy="8.5" rx="3.5" ry="2.5" fill="#3aa028"/></svg>
<div class="t" style="left:34px;top:281.65px;font-size:7.4px;color:#1a1a1a;">Счета</div>
<svg style="left:8px;top:293.5px" width="7" height="7" viewBox="0 0 7 7"><rect x="0.5" y="0.5" width="6" height="6" fill="#fff" stroke="#a0a0a0"/><path d="M1.5 3.5h4" stroke="#404040"/></svg>
<svg style="left:19px;top:292.5px" width="9" height="9" viewBox="0 0 9 9"><rect x="0.5" y="0.5" width="8" height="8.5" rx="0.8" fill="#f5d230" stroke="#c09800"/><path d="M6 1.8c-1.2-0.3-1.8 0.3-2 1.3L3 7.8C2.8 8.5 2.3 8.6 1.8 8.4M2.8 4h2.8" stroke="#1a1a1a" stroke-width="0.9" fill="none"/></svg>
<div class="t" style="left:34px;top:293.30px;font-size:7.5px;color:#1a1a1a;">Индикаторы</div>
<svg style="left:22px;top:305px" width="7" height="7" viewBox="0 0 7 7"><rect x="0.5" y="0.5" width="6" height="6" fill="#fff" stroke="#a0a0a0"/><path d="M1.5 3.5h4" stroke="#404040"/></svg>
<svg style="left:33px;top:304px" width="9" height="9" viewBox="0 0 9 9"><rect x="0.5" y="0.5" width="8" height="8.5" rx="0.8" fill="#f5d230" stroke="#c09800"/><path d="M6 1.8c-1.2-0.3-1.8 0.3-2 1.3L3 7.8C2.8 8.5 2.3 8.6 1.8 8.4M2.8 4h2.8" stroke="#1a1a1a" stroke-width="0.9" fill="none"/></svg>
<div class="t" style="left:47.5px;top:304.90px;font-size:7.5px;color:#1a1a1a;">Трендовые</div>
<div class="a" style="left:3px;top:313px;width:125px;height:105px;overflow:hidden">
<div class="a" style="left:37px;top:6.9px;width:6px;height:1px;background:#cfcfcf"></div>
<svg style="left:43px;top:2px" width="9" height="9" viewBox="0 0 9 9"><rect x="0.5" y="0.5" width="8" height="8.5" rx="0.8" fill="#f5d230" stroke="#c09800"/><path d="M6 1.8c-1.2-0.3-1.8 0.3-2 1.3L3 7.8C2.8 8.5 2.3 8.6 1.8 8.4M2.8 4h2.8" stroke="#1a1a1a" stroke-width="0.9" fill="none"/></svg>
<div class="t" style="left:58px;top:3.30px;font-size:7.5px;color:#1a1a1a;">Adaptive Moving Average</div>
<div class="a" style="left:37px;top:18.5px;width:6px;height:1px;background:#cfcfcf"></div>
<svg style="left:43px;top:14px" width="9" height="9" viewBox="0 0 9 9"><rect x="0.5" y="0.5" width="8" height="8.5" rx="0.8" fill="#f5d230" stroke="#c09800"/><path d="M6 1.8c-1.2-0.3-1.8 0.3-2 1.3L3 7.8C2.8 8.5 2.3 8.6 1.8 8.4M2.8 4h2.8" stroke="#1a1a1a" stroke-width="0.9" fill="none"/></svg>
<div class="t" style="left:58px;top:14.90px;font-size:7.5px;color:#1a1a1a;">Average Directional Movement Index</div>
<div class="a" style="left:37px;top:30.1px;width:6px;height:1px;background:#cfcfcf"></div>
<svg style="left:43px;top:26px" width="9" height="9" viewBox="0 0 9 9"><rect x="0.5" y="0.5" width="8" height="8.5" rx="0.8" fill="#f5d230" stroke="#c09800"/><path d="M6 1.8c-1.2-0.3-1.8 0.3-2 1.3L3 7.8C2.8 8.5 2.3 8.6 1.8 8.4M2.8 4h2.8" stroke="#1a1a1a" stroke-width="0.9" fill="none"/></svg>
<div class="t" style="left:58px;top:26.50px;font-size:7.5px;color:#1a1a1a;">Average Directional Movement Index Wilder</div>
<div class="a" style="left:37px;top:41.7px;width:6px;height:1px;background:#cfcfcf"></div>
<svg style="left:43px;top:37px" width="9" height="9" viewBox="0 0 9 9"><rect x="0.5" y="0.5" width="8" height="8.5" rx="0.8" fill="#f5d230" stroke="#c09800"/><path d="M6 1.8c-1.2-0.3-1.8 0.3-2 1.3L3 7.8C2.8 8.5 2.3 8.6 1.8 8.4M2.8 4h2.8" stroke="#1a1a1a" stroke-width="0.9" fill="none"/></svg>
<div class="t" style="left:58px;top:38.10px;font-size:7.5px;color:#1a1a1a;">Bollinger Bands</div>
<div class="a" style="left:37px;top:53.3px;width:6px;height:1px;background:#cfcfcf"></div>
<svg style="left:43px;top:49px" width="9" height="9" viewBox="0 0 9 9"><rect x="0.5" y="0.5" width="8" height="8.5" rx="0.8" fill="#f5d230" stroke="#c09800"/><path d="M6 1.8c-1.2-0.3-1.8 0.3-2 1.3L3 7.8C2.8 8.5 2.3 8.6 1.8 8.4M2.8 4h2.8" stroke="#1a1a1a" stroke-width="0.9" fill="none"/></svg>
<div class="t" style="left:58px;top:49.70px;font-size:7.5px;color:#1a1a1a;">Double Exponential Moving Average</div>
<div class="a" style="left:37px;top:64.9px;width:6px;height:1px;background:#cfcfcf"></div>
<svg style="left:43px;top:60px" width="9" height="9" viewBox="0 0 9 9"><rect x="0.5" y="0.5" width="8" height="8.5" rx="0.8" fill="#f5d230" stroke="#c09800"/><path d="M6 1.8c-1.2-0.3-1.8 0.3-2 1.3L3 7.8C2.8 8.5 2.3 8.6 1.8 8.4M2.8 4h2.8" stroke="#1a1a1a" stroke-width="0.9" fill="none"/></svg>
<div class="t" style="left:58px;top:61.30px;font-size:7.5px;color:#1a1a1a;">Envelopes</div>
<div class="a" style="left:37px;top:76.5px;width:6px;height:1px;background:#cfcfcf"></div>
<svg style="left:43px;top:72px" width="9" height="9" viewBox="0 0 9 9"><rect x="0.5" y="0.5" width="8" height="8.5" rx="0.8" fill="#f5d230" stroke="#c09800"/><path d="M6 1.8c-1.2-0.3-1.8 0.3-2 1.3L3 7.8C2.8 8.5 2.3 8.6 1.8 8.4M2.8 4h2.8" stroke="#1a1a1a" stroke-width="0.9" fill="none"/></svg>
<div class="t" style="left:58px;top:72.90px;font-size:7.5px;color:#1a1a1a;">Fractal Adaptive Moving Average</div>
<div class="a" style="left:37px;top:88.1px;width:6px;height:1px;background:#cfcfcf"></div>
<svg style="left:43px;top:84px" width="9" height="9" viewBox="0 0 9 9"><rect x="0.5" y="0.5" width="8" height="8.5" rx="0.8" fill="#f5d230" stroke="#c09800"/><path d="M6 1.8c-1.2-0.3-1.8 0.3-2 1.3L3 7.8C2.8 8.5 2.3 8.6 1.8 8.4M2.8 4h2.8" stroke="#1a1a1a" stroke-width="0.9" fill="none"/></svg>
<div class="t" style="left:58px;top:84.50px;font-size:7.5px;color:#1a1a1a;">Ichimoku Kinko Hyo</div>
<div class="a" style="left:37px;top:99.7px;width:6px;height:1px;background:#cfcfcf"></div>
<svg style="left:43px;top:95px" width="9" height="9" viewBox="0 0 9 9"><rect x="0.5" y="0.5" width="8" height="8.5" rx="0.8" fill="#f5d230" stroke="#c09800"/><path d="M6 1.8c-1.2-0.3-1.8 0.3-2 1.3L3 7.8C2.8 8.5 2.3 8.6 1.8 8.4M2.8 4h2.8" stroke="#1a1a1a" stroke-width="0.9" fill="none"/></svg>
<div class="t" style="left:58px;top:96.10px;font-size:7.5px;color:#1a1a1a;">Moving Average</div>
</div>
<div class="a" style="left:129px;top:280px;width:10px;height:138px;background:#f0f0f0;"></div>
<div class="a" style="left:130px;top:294px;width:8px;height:42px;background:#cdcdcd;"></div>
<svg style="left:131px;top:283px" width="7" height="4" viewBox="0 0 7 4"><path d="M0.5 3.5L3.5 0.5 6.5 3.5" stroke="#404040" fill="none"/></svg>
<svg style="left:131px;top:410px" width="7" height="4" viewBox="0 0 7 4"><path d="M0.5 0.5L3.5 3.5 6.5 0.5" stroke="#404040" fill="none"/></svg>
<div class="a" style="left:3px;top:418px;width:136px;height:15px;background:#f0f0f0;"></div>
<div class="a" style="left:44px;top:417px;width:95px;height:1.5px;background:#505050;"></div>
<div class="a" style="left:5px;top:417px;width:39px;height:13px;background:#fff;border:1px solid #404040;border-top:none;border-left-width:1.5px;border-bottom-width:1.5px"></div>
<div class="t" style="left:12px;top:420.35px;font-size:7.6px;color:#1a1a1a;">Общие</div>
<div class="t" style="left:50px;top:420.35px;font-size:7.6px;color:#9a9a9a;">Избранное</div>
<div class="a" style="left:139px;top:53px;width:3px;height:380px;background:#f0f0f0;"></div>
<div class="a" style="left:142px;top:53px;width:1px;height:380px;background:#a0a0a0;"></div>
</body></html>
